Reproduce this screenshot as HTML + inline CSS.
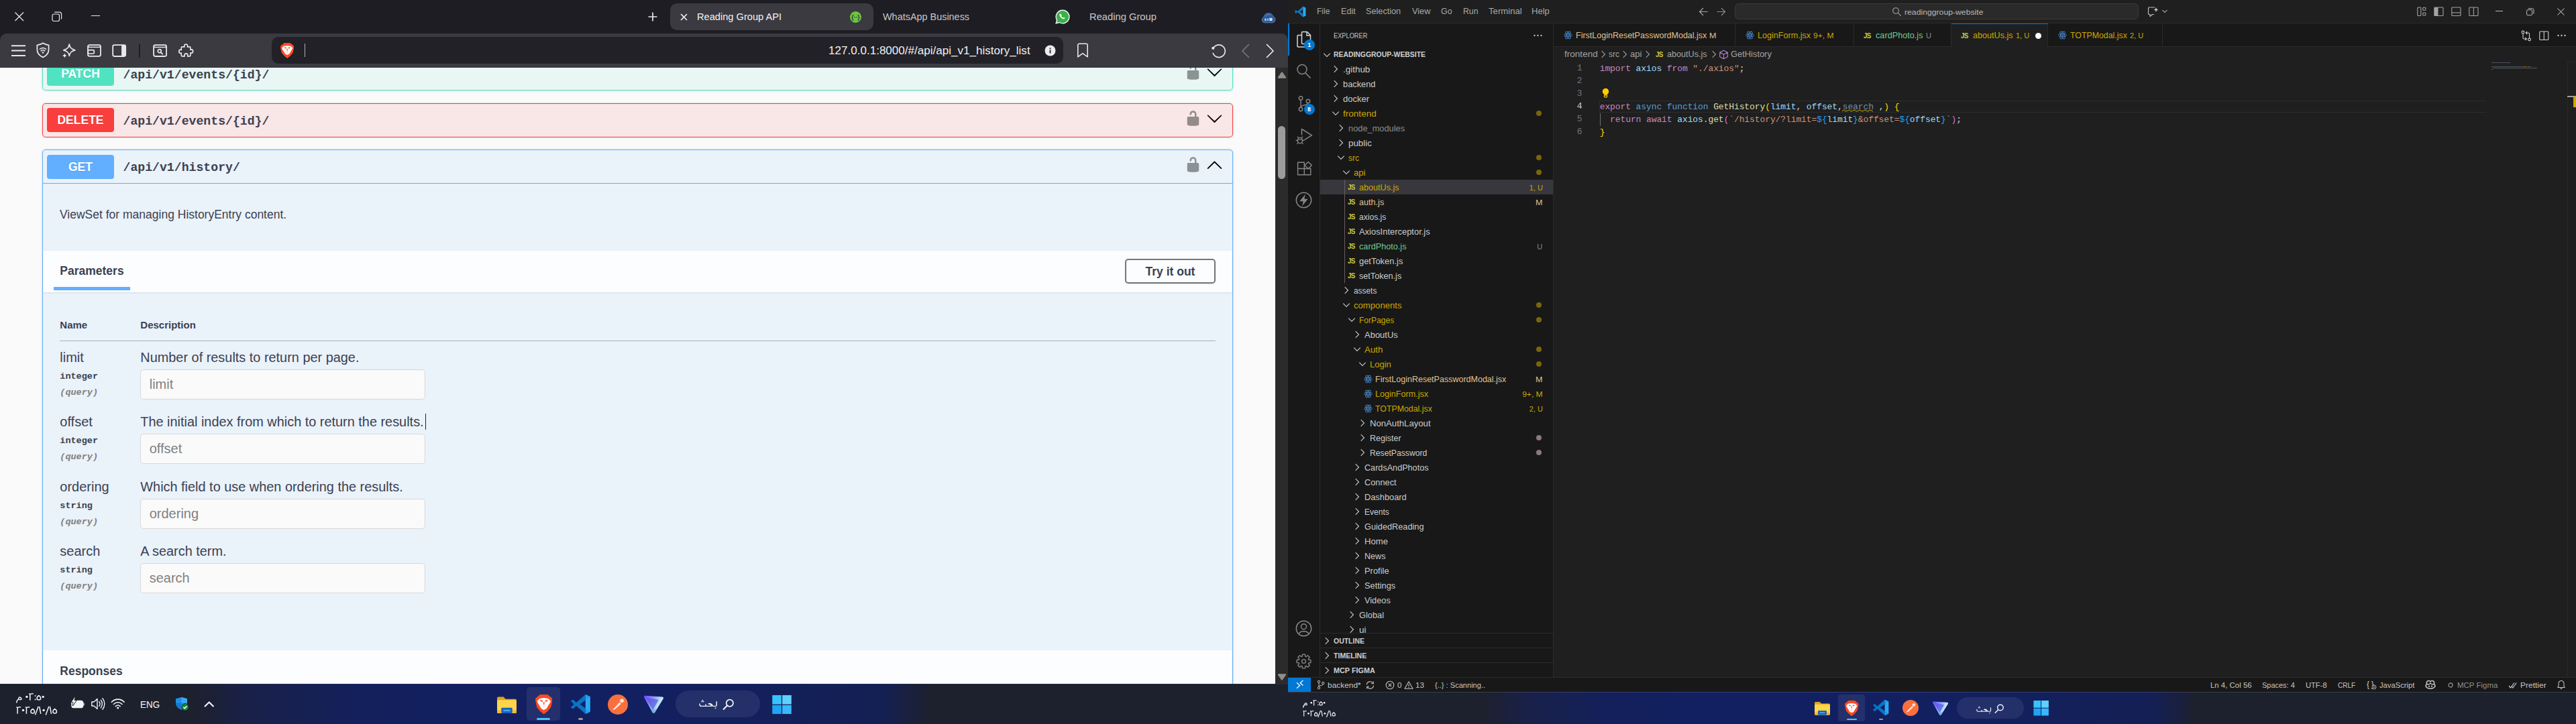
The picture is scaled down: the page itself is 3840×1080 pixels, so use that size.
<!DOCTYPE html>
<html><head><meta charset="utf-8"><title>screen</title>
<style>
html,body{margin:0;padding:0;background:#1f1f1f;}
body{width:3840px;height:1080px;overflow:hidden;position:relative;font-family:'Liberation Sans',sans-serif;}
.mon{position:absolute;top:0;width:1920px;height:1080px;overflow:hidden;}
svg{display:block;}
</style></head><body>
<div class="mon" style="left:0;background:#fafafa">
<div style="position:absolute;left:0;top:101px;width:1901px;height:919px;background:#fafafa;overflow:hidden">
<div style="position:absolute;left:0;top:-101px;width:1901px;height:1100px">
<div style="position:absolute;left:63px;top:84px;width:1775px;height:50.7px;box-sizing:border-box;border:1px solid #50e3c2;border-radius:5px;background:rgba(80,227,194,.1);box-shadow:0 0 3px rgba(0,0,0,.19)"></div>
<div style="position:absolute;left:70px;top:91.9px;width:100px;height:36px;border-radius:4px;background:#50e3c2;color:#fff;font:bold 17.5px/36px 'Liberation Sans', sans-serif;text-align:center;text-shadow:0 1px 0 rgba(0,0,0,.1)">PATCH</div>
<div style="position:absolute;left:183.5px;top:99.20px;line-height:27px;font-size:18.17px;font-family:'Liberation Mono', monospace;color:#3b4151;white-space:pre;font-weight:bold;">/api/v1/events/{id}/</div>
<svg style="position:absolute;left:1765.75px;top:94.8px;" width="25" height="25" viewBox="0 0 20 20"><path d="M15.8 8H14V5.6C14 2.703 12.665 1 10 1 7.334 1 6 2.703 6 5.6V6h2v-.801C8 3.754 8.797 3 10 3c1.203 0 2 .754 2 2.199V8H4c-.553 0-1 .646-1 1.199V17c0 .549.428 1.139.951 1.307l1.197.387C5.672 18.861 6.55 19 7.1 19h5.8c.549 0 1.428-.139 1.951-.307l1.196-.387c.524-.167.953-.757.953-1.306V9.199C17 8.646 16.352 8 15.8 8z" fill="#000" fill-opacity=".4"/></svg>
<svg style="position:absolute;left:1798px;top:94.60000000000001px;" width="25" height="25" viewBox="0 0 20 20"><path d="M17.418 6.109c.272-.268.709-.268.979 0s.271.701 0 .969l-7.908 7.83c-.27.268-.707.268-.979 0l-7.908-7.83c-.27-.268-.27-.701 0-.969.271-.268.709-.268.979 0L10 13.25l7.418-7.141z" fill="#000"/></svg>
<div style="position:absolute;left:63px;top:154.2px;width:1775px;height:50.7px;box-sizing:border-box;border:1px solid #f93e3e;border-radius:5px;background:rgba(249,62,62,.1);box-shadow:0 0 3px rgba(0,0,0,.19)"></div>
<div style="position:absolute;left:70px;top:160.89999999999998px;width:100px;height:36px;border-radius:4px;background:#f93e3e;color:#fff;font:bold 17.5px/36px 'Liberation Sans', sans-serif;text-align:center;text-shadow:0 1px 0 rgba(0,0,0,.1)">DELETE</div>
<div style="position:absolute;left:183.5px;top:168.20px;line-height:27px;font-size:18.17px;font-family:'Liberation Mono', monospace;color:#3b4151;white-space:pre;font-weight:bold;">/api/v1/events/{id}/</div>
<svg style="position:absolute;left:1765.75px;top:163.79999999999998px;" width="25" height="25" viewBox="0 0 20 20"><path d="M15.8 8H14V5.6C14 2.703 12.665 1 10 1 7.334 1 6 2.703 6 5.6V6h2v-.801C8 3.754 8.797 3 10 3c1.203 0 2 .754 2 2.199V8H4c-.553 0-1 .646-1 1.199V17c0 .549.428 1.139.951 1.307l1.197.387C5.672 18.861 6.55 19 7.1 19h5.8c.549 0 1.428-.139 1.951-.307l1.196-.387c.524-.167.953-.757.953-1.306V9.199C17 8.646 16.352 8 15.8 8z" fill="#000" fill-opacity=".4"/></svg>
<svg style="position:absolute;left:1798px;top:163.6px;" width="25" height="25" viewBox="0 0 20 20"><path d="M17.418 6.109c.272-.268.709-.268.979 0s.271.701 0 .969l-7.908 7.83c-.27.268-.707.268-.979 0l-7.908-7.83c-.27-.268-.27-.701 0-.969.271-.268.709-.268.979 0L10 13.25l7.418-7.141z" fill="#000"/></svg>
<div style="position:absolute;left:63px;top:223.2px;width:1775px;height:900px;box-sizing:border-box;border:1px solid #61affe;border-radius:5px;background:rgba(97,175,254,.1);box-shadow:0 0 3px rgba(0,0,0,.19)"></div>
<div style="position:absolute;left:70px;top:230.79999999999998px;width:100px;height:36px;border-radius:4px;background:#61affe;color:#fff;font:bold 17.5px/36px 'Liberation Sans', sans-serif;text-align:center;text-shadow:0 1px 0 rgba(0,0,0,.1)">GET</div>
<div style="position:absolute;left:183.5px;top:237.20px;line-height:27px;font-size:18.17px;font-family:'Liberation Mono', monospace;color:#3b4151;white-space:pre;font-weight:bold;">/api/v1/history/</div>
<svg style="position:absolute;left:1765.75px;top:232.79999999999998px;" width="25" height="25" viewBox="0 0 20 20"><path d="M15.8 8H14V5.6C14 2.703 12.665 1 10 1 7.334 1 6 2.703 6 5.6V6h2v-.801C8 3.754 8.797 3 10 3c1.203 0 2 .754 2 2.199V8H4c-.553 0-1 .646-1 1.199V17c0 .549.428 1.139.951 1.307l1.197.387C5.672 18.861 6.55 19 7.1 19h5.8c.549 0 1.428-.139 1.951-.307l1.196-.387c.524-.167.953-.757.953-1.306V9.199C17 8.646 16.352 8 15.8 8z" fill="#000" fill-opacity=".4"/></svg>
<svg style="position:absolute;left:1798px;top:232.6px;" width="25" height="25" viewBox="0 0 20 20"><path d="M 17.418 14.908 c .272 .268 .709 .268 .979 0 s .271 -.701 0 -.969 l -7.908 -7.83 c -.27 -.268 -.707 -.268 -.979 0 l -7.908 7.83 c -.27 .268 -.27 .701 0 .969 c .271 .268 .709 .268 .978 0 L 10 7.75 l 7.418 7.158 z" fill="#000"/></svg>
<div style="position:absolute;left:64px;top:273px;width:1773px;height:1px;background:#61affe;"></div>
<div style="position:absolute;left:89px;top:307.30px;line-height:26px;font-size:17.5px;font-family:'Liberation Sans', sans-serif;color:#3b4151;white-space:pre;">ViewSet for managing HistoryEntry content.</div>
<div style="position:absolute;left:64px;top:373.7px;width:1773px;height:62.5px;background:rgba(255,255,255,.8);box-shadow:0 1px 2px rgba(0,0,0,.1);"></div>
<div style="position:absolute;left:89.3px;top:391.30px;line-height:26px;font-size:17.5px;font-family:'Liberation Sans', sans-serif;color:#3b4151;white-space:pre;font-weight:bold;">Parameters</div>
<div style="position:absolute;left:80px;top:428px;width:114px;height:5px;background:#61affe;"></div>
<div style="position:absolute;left:1677px;top:386px;width:135px;height:37px;box-sizing:border-box;border:2px solid #747878;border-radius:5px;color:#3b4151;font:bold 17.5px/35px 'Liberation Sans', sans-serif;text-align:center;box-shadow:0 1px 2px rgba(0,0,0,.1)">Try it out</div>
<div style="position:absolute;left:89.3px;top:474.30px;line-height:22px;font-size:15px;font-family:'Liberation Sans', sans-serif;color:#3b4151;white-space:pre;font-weight:bold;">Name</div>
<div style="position:absolute;left:209.3px;top:474.30px;line-height:22px;font-size:15px;font-family:'Liberation Sans', sans-serif;color:#3b4151;white-space:pre;font-weight:bold;">Description</div>
<div style="position:absolute;left:89px;top:507.7px;width:1723px;height:1px;background:rgba(59,65,81,.38);"></div>
<div style="position:absolute;left:89.3px;top:517.80px;line-height:30px;font-size:20px;font-family:'Liberation Sans', sans-serif;color:#3b4151;white-space:pre;">limit</div>
<div style="position:absolute;left:209.3px;top:517.80px;line-height:30px;font-size:19.9px;font-family:'Liberation Sans', sans-serif;color:#3b4151;white-space:pre;">Number of results to return per page.</div>
<div style="position:absolute;left:89.3px;top:552.00px;line-height:20px;font-size:13.5px;font-family:'Liberation Mono', monospace;color:#3b4151;white-space:pre;font-weight:bold;">integer</div>
<div style="position:absolute;left:89.3px;top:575.70px;line-height:20px;font-size:13.5px;font-family:'Liberation Mono', monospace;color:#808080;white-space:pre;font-weight:bold;font-style:italic;">(query)</div>
<div style="position:absolute;left:209px;top:551px;width:425px;height:45px;box-sizing:border-box;border:1px solid #d9d9d9;border-radius:5px;background:#fafafa"></div>
<div style="position:absolute;left:222.7px;top:557.80px;line-height:30px;font-size:20px;font-family:'Liberation Sans', sans-serif;color:#808080;white-space:pre;">limit</div>
<div style="position:absolute;left:89.3px;top:613.80px;line-height:30px;font-size:20px;font-family:'Liberation Sans', sans-serif;color:#3b4151;white-space:pre;">offset</div>
<div style="position:absolute;left:209.3px;top:613.80px;line-height:30px;font-size:19.9px;font-family:'Liberation Sans', sans-serif;color:#3b4151;white-space:pre;">The initial index from which to return the results.</div>
<div style="position:absolute;left:89.3px;top:648.00px;line-height:20px;font-size:13.5px;font-family:'Liberation Mono', monospace;color:#3b4151;white-space:pre;font-weight:bold;">integer</div>
<div style="position:absolute;left:89.3px;top:671.70px;line-height:20px;font-size:13.5px;font-family:'Liberation Mono', monospace;color:#808080;white-space:pre;font-weight:bold;font-style:italic;">(query)</div>
<div style="position:absolute;left:209px;top:647px;width:425px;height:45px;box-sizing:border-box;border:1px solid #d9d9d9;border-radius:5px;background:#fafafa"></div>
<div style="position:absolute;left:222.7px;top:653.80px;line-height:30px;font-size:20px;font-family:'Liberation Sans', sans-serif;color:#808080;white-space:pre;">offset</div>
<div style="position:absolute;left:89.3px;top:710.80px;line-height:30px;font-size:20px;font-family:'Liberation Sans', sans-serif;color:#3b4151;white-space:pre;">ordering</div>
<div style="position:absolute;left:209.3px;top:710.80px;line-height:30px;font-size:19.9px;font-family:'Liberation Sans', sans-serif;color:#3b4151;white-space:pre;">Which field to use when ordering the results.</div>
<div style="position:absolute;left:89.3px;top:745.00px;line-height:20px;font-size:13.5px;font-family:'Liberation Mono', monospace;color:#3b4151;white-space:pre;font-weight:bold;">string</div>
<div style="position:absolute;left:89.3px;top:768.70px;line-height:20px;font-size:13.5px;font-family:'Liberation Mono', monospace;color:#808080;white-space:pre;font-weight:bold;font-style:italic;">(query)</div>
<div style="position:absolute;left:209px;top:744px;width:425px;height:45px;box-sizing:border-box;border:1px solid #d9d9d9;border-radius:5px;background:#fafafa"></div>
<div style="position:absolute;left:222.7px;top:750.80px;line-height:30px;font-size:20px;font-family:'Liberation Sans', sans-serif;color:#808080;white-space:pre;">ordering</div>
<div style="position:absolute;left:89.3px;top:806.80px;line-height:30px;font-size:20px;font-family:'Liberation Sans', sans-serif;color:#3b4151;white-space:pre;">search</div>
<div style="position:absolute;left:209.3px;top:806.80px;line-height:30px;font-size:19.9px;font-family:'Liberation Sans', sans-serif;color:#3b4151;white-space:pre;">A search term.</div>
<div style="position:absolute;left:89.3px;top:841.00px;line-height:20px;font-size:13.5px;font-family:'Liberation Mono', monospace;color:#3b4151;white-space:pre;font-weight:bold;">string</div>
<div style="position:absolute;left:89.3px;top:864.70px;line-height:20px;font-size:13.5px;font-family:'Liberation Mono', monospace;color:#808080;white-space:pre;font-weight:bold;font-style:italic;">(query)</div>
<div style="position:absolute;left:209px;top:840px;width:425px;height:45px;box-sizing:border-box;border:1px solid #d9d9d9;border-radius:5px;background:#fafafa"></div>
<div style="position:absolute;left:222.7px;top:846.80px;line-height:30px;font-size:20px;font-family:'Liberation Sans', sans-serif;color:#808080;white-space:pre;">search</div>
<div style="position:absolute;left:633.6px;top:617px;width:1.2px;height:24px;background:#222;"></div>
<div style="position:absolute;left:64px;top:969.7px;width:1773px;height:62.5px;background:rgba(255,255,255,.8);box-shadow:0 1px 2px rgba(0,0,0,.1);"></div>
<div style="position:absolute;left:89.3px;top:988.20px;line-height:26px;font-size:17.5px;font-family:'Liberation Sans', sans-serif;color:#3b4151;white-space:pre;font-weight:bold;">Responses</div>
</div></div>
<div style="position:absolute;left:1901px;top:101px;width:19px;height:919px;background:#2b2b2b;"></div>
<svg style="position:absolute;left:1903.5px;top:106px;" width="14" height="12" viewBox="0 0 14 12"><path d="M7 2.2L12.2 9.8H1.8z" fill="#8f908e" stroke="#8f908e" stroke-width="2" stroke-linejoin="round"/></svg>
<svg style="position:absolute;left:1903.5px;top:1003.5px;" width="14" height="12" viewBox="0 0 14 12"><path d="M7 9.8L12.2 2.2H1.8z" fill="#8f908e" stroke="#8f908e" stroke-width="2" stroke-linejoin="round"/></svg>
<div style="position:absolute;left:1905px;top:188px;width:11px;height:79px;background:#9b9d9a;border-radius:5.5px;"></div>
<div style="position:absolute;left:0px;top:0px;width:1920px;height:64px;background:#1e1d23;"></div>
<div style="position:absolute;left:0px;top:50px;width:1920px;height:51px;background:#3b3a40;border-radius:10px 10px 0 0;"></div>
<svg style="position:absolute;left:22px;top:18px;" width="14" height="14" viewBox="0 0 14 14"><path d="M0.5 0.5L13 13M13 0.5L0.5 13" stroke="#e8e8ec" stroke-width="1.3" fill="none"/></svg>
<svg style="position:absolute;left:77px;top:17px;" width="16" height="16" viewBox="0 0 16 16"><rect x="1" y="4" width="10.5" height="10.5" rx="2.2" fill="none" stroke="#e8e8ec" stroke-width="1.2"/><path d="M4.2 1.2H11.6A3 3 0 0 1 14.6 4.2V11.4" fill="none" stroke="#e8e8ec" stroke-width="1.2"/></svg>
<div style="position:absolute;left:136px;top:23px;width:13px;height:1.3px;background:#e8e8ec;"></div>
<svg style="position:absolute;left:966px;top:18px;" width="14" height="14" viewBox="0 0 14 14"><path d="M7 0.5V13.5M0.5 7H13.5" stroke="#e8e8ec" stroke-width="1.7" fill="none"/></svg>
<div style="position:absolute;left:999px;top:5px;width:302.5px;height:40px;background:#3b3a40;border-radius:10px;"></div>
<svg style="position:absolute;left:1014px;top:20px;" width="11" height="11" viewBox="0 0 11 11"><path d="M1 1L10 10M10 1L1 10" stroke="#e8e8ec" stroke-width="1.7" fill="none"/></svg>
<div style="position:absolute;left:1039px;top:14.00px;line-height:22px;font-size:14.55px;font-family:'Liberation Sans', sans-serif;color:#f2f2f4;white-space:pre;transform:scaleX(1.0056);transform-origin:left center;">Reading Group API</div>
<svg style="position:absolute;left:1266px;top:15.5px;" width="19" height="19" viewBox="0 0 19 19"><circle cx="9.5" cy="9.5" r="9" fill="#72c23f" stroke="#1d3a2a" stroke-width="0.9"/><text x="9.5" y="12.6" font-size="8.5" font-weight="bold" text-anchor="middle" fill="#173647" font-family="Liberation Sans, sans-serif">{··}</text></svg>
<div style="position:absolute;left:1316px;top:14.00px;line-height:22px;font-size:14.55px;font-family:'Liberation Sans', sans-serif;color:#c6c6ca;white-space:pre;transform:scaleX(0.9915);transform-origin:left center;">WhatsApp Business</div>
<svg style="position:absolute;left:1573px;top:14px;" width="22" height="22" viewBox="0 0 22 22"><path d="M11 1.2a9.8 9.8 0 0 0-8.4 14.8L1.2 20.8l5-1.3A9.8 9.8 0 1 0 11 1.2z" fill="#37b24a" stroke="#f3f3f3" stroke-width="1.4"/><path d="M7.6 6.2c-.4 0-.9.3-1.1 1-.5 1.5.3 3.3 2.1 5.1 1.8 1.8 3.6 2.4 5 1.8.7-.3 1-.9.9-1.3l-1.9-1-.9.9c-.9-.3-2.3-1.7-2.7-2.7l.8-.9z" fill="#fff"/></svg>
<div style="position:absolute;left:1624px;top:14.00px;line-height:22px;font-size:14.55px;font-family:'Liberation Sans', sans-serif;color:#c6c6ca;white-space:pre;transform:scaleX(1.0124);transform-origin:left center;">Reading Group</div>
<svg style="position:absolute;left:1880px;top:15px;" width="22" height="21" viewBox="0 0 22 21"><path d="M5.500 18.900A4.300 4.300 0 0 1 3.700 10.700 7.400 7.400 0 0 1 18 9.800 4.700 4.700 0 0 1 16.800 18.900z" fill="#2a5a9a" stroke="#7f9fc6" stroke-width=".6"/><path d="M7 9.500A4.500 4.500 0 0 1 14.500 8" fill="none" stroke="#4a80c2" stroke-width="1.200"/><rect x="5.300" y="12.600" width="2.300" height="3.400" fill="#c3d5ec"/><rect x="9" y="12.200" width="2" height="3.800" fill="#8fb3e0"/><rect x="12.300" y="11.800" width="4.300" height="4.200" fill="#d3e1f3"/></svg>
<svg style="position:absolute;left:17px;top:66px;" width="22" height="19" viewBox="0 0 22 19"><path d="M0 2.200H21M0 9.600H21M0 16.900H21" stroke="#e8e8ec" stroke-width="2" fill="none"/></svg>
<svg style="position:absolute;left:53px;top:63px;" width="22" height="24" viewBox="0 0 22 24"><path d="M11 1.300C13.500 3 16.500 3.900 19.600 4.300V11c0 5.400-3.700 9.300-8.600 11.400C6.100 20.300 2.400 16.400 2.400 11V4.300C5.500 3.900 8.500 3 11 1.300z" fill="none" stroke="#e8e8ec" stroke-width="1.750" stroke-linejoin="round"/><path d="M6.500 10.300a6.400 6.400 0 0 1 9 0M8.300 12.900a3.800 3.800 0 0 1 5.400 0" fill="none" stroke="#e8e8ec" stroke-width="1.600" stroke-linecap="round"/><circle cx="11" cy="15.600" r="1.250" fill="#e8e8ec"/></svg>
<svg style="position:absolute;left:91px;top:64px;" width="24" height="24" viewBox="0 0 24 24"><path d="M12.300 2.200C13 7 15 9.300 20.800 10.800 15 12.300 13 14.600 12.300 19.400 11.600 14.600 9.600 12.300 3.800 10.800 9.600 9.300 11.600 7 12.300 2.200z" fill="none" stroke="#e8e8ec" stroke-width="1.800" stroke-linejoin="round"/><path d="M5.300 15.300c.4 2.200 1.300 3.200 3.500 3.600-2.200.4-3.100 1.400-3.500 3.600-.4-2.200-1.300-3.200-3.500-3.600 2.200-.4 3.100-1.400 3.500-3.600z" fill="#e8e8ec"/></svg>
<svg style="position:absolute;left:129px;top:65px;" width="23" height="21" viewBox="0 0 23 21"><rect x="2" y="2.200" width="19" height="16.600" rx="2.600" fill="none" stroke="#e8e8ec" stroke-width="1.800"/><path d="M2 5.300H21" stroke="#e8e8ec" stroke-width="1.500"/><rect x="2.300" y="9.600" width="9" height="5.400" rx="1.600" fill="none" stroke="#e8e8ec" stroke-width="1.700"/></svg>
<svg style="position:absolute;left:166px;top:65px;" width="23" height="21" viewBox="0 0 23 21"><rect x="2.200" y="2.200" width="19" height="16.800" rx="2.400" fill="none" stroke="#e8e8ec" stroke-width="1.800"/><path d="M15.100 2.200H18.800A2.400 2.400 0 0 1 21.200 4.600V16.600A2.400 2.400 0 0 1 18.800 19H15.100z" fill="#e8e8ec"/></svg>
<div style="position:absolute;left:207.2px;top:65.5px;width:1.6px;height:20px;background:#1f1e24;"></div>
<svg style="position:absolute;left:227px;top:65px;" width="23" height="21" viewBox="0 0 23 21"><rect x="2.100" y="2.200" width="19" height="16.800" rx="2.400" fill="none" stroke="#e8e8ec" stroke-width="1.800"/><path d="M2.100 5.400H21.100" stroke="#e8e8ec" stroke-width="1.500"/><circle cx="10.800" cy="11.200" r="2.500" fill="none" stroke="#e8e8ec" stroke-width="1.700"/><path d="M12.800 13.200L15.300 15.700" stroke="#e8e8ec" stroke-width="1.800" stroke-linecap="round"/></svg>
<svg style="position:absolute;left:265px;top:63px;" width="24" height="24" viewBox="0 0 24 24"><path d="M9.300 5.200a2.700 2.700 0 0 1 5.400 0c0 .7-.2 1-.2 1.400h3.700a1.300 1.300 0 0 1 1.300 1.300v3.200c.5 0 .8-.3 1.500-.3a2.700 2.700 0 0 1 0 5.400c-.7 0-1-.3-1.500-.3v3.900a1.300 1.300 0 0 1-1.300 1.300h-3.500c0-.5.300-.8.300-1.500a2.700 2.700 0 0 0-5.400 0c0 .7.300 1 .3 1.500H5.600a1.300 1.300 0 0 1-1.300-1.300v-3.700c-.5 0-.8.300-1.200.3a2.700 2.700 0 0 1 0-5.400c.4 0 .7.300 1.200.3V7.900a1.300 1.300 0 0 1 1.300-1.300h3.900c0-.4-.2-.7-.2-1.400z" fill="none" stroke="#e8e8ec" stroke-width="1.800" stroke-linejoin="round" transform="translate(1.400 .6) scale(.9 .96)"/></svg>
<div style="position:absolute;left:405px;top:55px;width:1180px;height:40px;background:#222127;border-radius:10px;"></div>
<svg style="position:absolute;left:418px;top:64px;" width="20.4" height="23" viewBox="313 155 344 396" preserveAspectRatio="none"><path d="M410 155L560 155 602 190 657 235 651 300 626 410 560 490 485 551 410 490 344 410 319 300 313 235 368 190z" fill="#fb4a22"/><path d="M398 236L485 223 572 236 622 285 602 332 560 396 545 431 485 467 425 431 410 396 368 332 348 285z" fill="#fff"/><path d="M408 263L463 276 456 301 420 291zM562 263L507 276 514 301 550 291zM473 306H497L494 352 485 362 476 352zM452 402L485 385 518 402 485 394z" fill="#fb4a22"/></svg>
<div style="position:absolute;left:453.7px;top:65px;width:1.4px;height:20px;background:#aeb0b6;"></div>
<div style="position:absolute;left:1235.3px;top:63.00px;line-height:25px;font-size:16.97px;font-family:'Liberation Sans', sans-serif;color:#f0f0f3;white-space:pre;transform:scaleX(1.0062);transform-origin:left center;">127.0.0.1:8000/#/api/api_v1_history_list</div>
<svg style="position:absolute;left:1556.5px;top:66.5px;" width="17" height="17" viewBox="0 0 17 17"><circle cx="8.5" cy="8.5" r="8" fill="#ededf0"/><rect x="7.6" y="7.3" width="1.8" height="5.2" fill="#222127"/><rect x="7.6" y="4.3" width="1.8" height="1.8" fill="#222127"/></svg>
<svg style="position:absolute;left:1605px;top:64px;" width="18" height="23" viewBox="0 0 18 23"><path d="M1.8 3.2A2 2 0 0 1 3.8 1.2H14.2A2 2 0 0 1 16.2 3.2V20.8L9 15.6 1.8 20.8z" fill="none" stroke="#e8e8ec" stroke-width="1.6" stroke-linejoin="round"/></svg>
<svg style="position:absolute;left:1804px;top:63px;" width="26" height="25" viewBox="0 0 26 25"><path d="M4.600 9.200A9.300 9.300 0 1 1 4.300 16.500" fill="none" stroke="#e8e8ec" stroke-width="1.700" stroke-linecap="round"/><circle cx="4.300" cy="8.800" r="2.100" fill="#e8e8ec"/></svg>
<svg style="position:absolute;left:1850px;top:65px;" width="14" height="22" viewBox="0 0 14 22"><path d="M11.5 1.5L2 11l9.5 9.5" fill="none" stroke="#77767e" stroke-width="1.7" stroke-linecap="round" stroke-linejoin="round"/></svg>
<svg style="position:absolute;left:1886px;top:65px;" width="14" height="22" viewBox="0 0 14 22"><path d="M2.5 1.5L12 11l-9.5 9.5" fill="none" stroke="#e8e8ec" stroke-width="1.7" stroke-linecap="round" stroke-linejoin="round"/></svg>
<div style="position:absolute;left:0px;top:1020px;width:1920px;height:60px;background:linear-gradient(90deg,#1d202d 0,#1d202d 285px,#19214a 375px,#14205a 520px,#122062 700px,#122060 1000px,#142054 1300px,#142052 1320px,#191f40 1350px,#1d202d 1390px,#1d202d 1920px);"></div>
<div style="position:absolute;left:0px;top:1020px;width:1920px;height:1px;background:rgba(255,255,255,.06);"></div>
<svg style="position:absolute;left:23.6px;top:1034.3px;overflow:visible;" width="45.0" height="16.0" viewBox="0 0 45.0 16.0"><g transform="scale(1.0)"><path d="M7.80 9.6C8.00 5.2 3.60 5.2 3.80 8.3C4.00 9.9 6.20 9.9 7.80 9.3M3.90 8.6C2.20 9.6 0.80 11.500 0.80 14.6" fill="none" stroke="#f4f4f6" stroke-width="1.5" stroke-linecap="butt" stroke-linejoin="round"/><circle cx="15.90" cy="5.4" r="1.7" fill="#f4f4f6"/><path d="M20.80 10.7V.9M19.20 .9H20.80M20.80 2.6C21.20 .9 24.30 .2 25.70 1.2" fill="none" stroke="#f4f4f6" stroke-width="1.5" stroke-linecap="butt" stroke-linejoin="round"/><circle cx="28.60" cy="3.9" r=".95" fill="#f4f4f6"/><circle cx="28.60" cy="9.5" r=".95" fill="#f4f4f6"/><path d="M33.90 3.6C31.80 4.6 31.10 6.4 31.10 7.7C31.10 10.700 36.70 10.700 36.70 7.7C36.70 6.4 36.00 4.6 33.90 3.6z" fill="none" stroke="#f4f4f6" stroke-width="1.5" stroke-linecap="butt" stroke-linejoin="round"/><circle cx="40.20" cy="5.4" r="1.7" fill="#f4f4f6"/></g></svg><svg style="position:absolute;left:23.6px;top:1054.1px;overflow:visible;" width="63.2" height="16.0" viewBox="0 0 63.2 16.0"><g transform="scale(1.0)"><path d="M2.10 10.7V.9M0.50 .9H2.10M2.10 2.6C2.50 .9 5.60 .2 7.00 1.2" fill="none" stroke="#f4f4f6" stroke-width="1.5" stroke-linecap="butt" stroke-linejoin="round"/><circle cx="10.50" cy="5.4" r="1.7" fill="#f4f4f6"/><path d="M15.40 10.7V.9M13.80 .9H15.40M15.40 2.6C15.80 .9 18.90 .2 20.30 1.2" fill="none" stroke="#f4f4f6" stroke-width="1.5" stroke-linecap="butt" stroke-linejoin="round"/><path d="M24.70 3.6C22.60 4.6 21.90 6.4 21.90 7.7C21.90 10.700 27.50 10.700 27.50 7.7C27.50 6.4 26.80 4.6 24.70 3.6z" fill="none" stroke="#f4f4f6" stroke-width="1.5" stroke-linecap="butt" stroke-linejoin="round"/><path d="M33.20 -.2L28.50 12.6" fill="none" stroke="#f4f4f6" stroke-width="1.5" stroke-linecap="butt" stroke-linejoin="round"/><path d="M34.70 0L36.80 10.8" fill="none" stroke="#f4f4f6" stroke-width="1.5" stroke-linecap="butt" stroke-linejoin="round"/><circle cx="41.10" cy="5.4" r="1.7" fill="#f4f4f6"/><path d="M48.90 -.2L44.20 12.6" fill="none" stroke="#f4f4f6" stroke-width="1.5" stroke-linecap="butt" stroke-linejoin="round"/><path d="M50.40 0L52.50 10.8" fill="none" stroke="#f4f4f6" stroke-width="1.5" stroke-linecap="butt" stroke-linejoin="round"/><path d="M57.70 3.6C55.60 4.6 54.90 6.4 54.90 7.7C54.90 10.700 60.50 10.700 60.50 7.7C60.50 6.4 59.80 4.6 57.70 3.6z" fill="none" stroke="#f4f4f6" stroke-width="1.5" stroke-linecap="butt" stroke-linejoin="round"/></g></svg>
<svg style="position:absolute;left:105px;top:1038px;" width="23" height="20" viewBox="0 0 23 20"><rect x="2" y="7.400" width="16.600" height="10.200" rx="3.200" fill="#f4f4f6" stroke="#f4f4f6" stroke-width="1.500"/><path d="M19.400 10C21.100 10.200 21.100 14.800 19.400 15z" fill="#f4f4f6"/><path d="M6.800 1.400L1.600 9.200H4.500L3.200 14.800 8.600 7H5.600z" fill="#f4f4f6" stroke="#1d202d" stroke-width="1.700" paint-order="stroke"/></svg>
<svg style="position:absolute;left:135px;top:1039px;" width="23" height="22" viewBox="0 0 23 22"><path d="M1.800 8H5L10 3.500V18.500L5 14H1.800z" fill="none" stroke="#f4f4f6" stroke-width="1.400" stroke-linejoin="round"/><path d="M12.800 7.800C14.300 9.600 14.300 12.400 12.800 14.200M15.300 5.300C18 8.500 18 13.500 15.300 16.700M17.900 2.800C21.800 7.500 21.800 14.500 17.900 19.200" fill="none" stroke="#f4f4f6" stroke-width="1.400" stroke-linecap="round"/></svg>
<svg style="position:absolute;left:165.3px;top:1041px;" width="21.5" height="17" viewBox="0 0 21.5 17"><path d="M1.300 6.200C6.600 .8 14.900 .8 20.200 6.200M4.400 9.500C8 5.900 13.500 5.900 17.100 9.500M7.400 12.600C9.400 10.700 12.100 10.700 14.100 12.600" fill="none" stroke="#f4f4f6" stroke-width="1.600" stroke-linecap="round"/><circle cx="10.750" cy="15" r="1.500" fill="#f4f4f6"/></svg>
<div style="position:absolute;left:208.7px;top:1039.60px;line-height:22px;font-size:14.55px;font-family:'Liberation Sans', sans-serif;color:#f4f4f6;white-space:pre;transform:scaleX(0.9227);transform-origin:left center;">ENG</div>
<svg style="position:absolute;left:261px;top:1039px;" width="22" height="22" viewBox="0 0 22 22"><path d="M9.500 1L18 3.200V9.500C18 14.500 14 18.200 9.500 19.800 5 18.200 1 14.500 1 9.500V3.200z" fill="#1f8fe6"/><path d="M9.500 1L18 3.200V9.500H9.500z" fill="#39a9f5"/><path d="M1 9.500H9.500V19.800C5 18.200 1 14.500 1 9.500z" fill="#1578cf"/><circle cx="15" cy="15.800" r="5.200" fill="#13893b" stroke="#1d202d" stroke-width=".8"/><path d="M12.500 15.900L14.300 17.700 17.600 14.200" fill="none" stroke="#fff" stroke-width="1.500"/></svg>
<svg style="position:absolute;left:303.5px;top:1044.5px;" width="16" height="11" viewBox="0 0 16 11"><path d="M1.600 8.600L7.750 2.400 13.900 8.600" fill="none" stroke="#f4f4f6" stroke-width="2.100" stroke-linecap="round" stroke-linejoin="round"/></svg>
<svg style="position:absolute;left:740px;top:1036.5px;" width="31" height="29" viewBox="0 0 32 30"><path d="M1 4.500A2 2 0 0 1 3 2.500H11L14 6H29A2 2 0 0 1 31 8V12H1z" fill="#e3a21a"/><rect x="1" y="7.500" width="30" height="20.500" rx="2" fill="#ffd54a"/><path d="M1 23H31V26A2 2 0 0 1 29 28H3A2 2 0 0 1 1 26z" fill="#f5b83a"/><rect x="7.500" y="19.500" width="17" height="8.500" rx="1.500" fill="#1464c0"/><rect x="10.500" y="22.500" width="11" height="2.200" rx="1" fill="#4ea3f1"/></svg>
<div style="position:absolute;left:785px;top:1025px;width:50px;height:50px;background:rgba(255,255,255,.075);border-radius:5px;"></div>
<svg style="position:absolute;left:797.5px;top:1035.5px;" width="25.5" height="29.5" viewBox="313 155 344 396" preserveAspectRatio="none"><path d="M410 155L560 155 602 190 657 235 651 300 626 410 560 490 485 551 410 490 344 410 319 300 313 235 368 190z" fill="#fb4a22"/><path d="M398 236L485 223 572 236 622 285 602 332 560 396 545 431 485 467 425 431 410 396 368 332 348 285z" fill="#fff"/><path d="M408 263L463 276 456 301 420 291zM562 263L507 276 514 301 550 291zM473 306H497L494 352 485 362 476 352zM452 402L485 385 518 402 485 394z" fill="#fb4a22"/></svg>
<div style="position:absolute;left:800px;top:1070.5px;width:19.5px;height:3px;background:#4cc2ff;border-radius:1.500px;"></div>
<svg style="position:absolute;left:850px;top:1035px;" width="31" height="31" viewBox="0 0 32 32"><path d="M23.500 1L30.800 4.500V27.500L23.500 31z" fill="#2aa9f3"/><path d="M23.500 1L9.300 13.300 4.400 8.800 .8 11.200 5.800 16 .8 20.800 4.400 23.200 9.300 18.700 23.500 31V22.300L14.800 16 23.500 9.700z" fill="#0a73c4"/><path d="M23.500 1L30.800 4.500 23.500 9.200z" fill="#1f9cf0"/><path d="M23.500 22.800L30.800 27.500 23.500 31z" fill="#1f9cf0"/></svg>
<div style="position:absolute;left:861.5px;top:1070.5px;width:7px;height:3px;background:#9a9ca6;border-radius:1.500px;"></div>
<svg style="position:absolute;left:905.5px;top:1035.5px;" width="30" height="30" viewBox="0 0 32 32"><circle cx="16" cy="16" r="16" fill="#f9703e"/><path d="M7.500 25L9.800 21.800 18.800 12.200 21.300 14.600 11.800 23.300z" fill="#fbe9dc"/><circle cx="22.400" cy="9.900" r="3" fill="#fbe9dc"/></svg>
<svg style="position:absolute;left:959px;top:1035.5px;" width="31" height="29" viewBox="0 0 32 30"><defs><linearGradient id="pg959" x1="0" y1=".1" x2="1" y2=".5"><stop offset="0" stop-color="#6d4aff"/><stop offset=".45" stop-color="#8f9dfb"/><stop offset=".8" stop-color="#c4e6fb"/><stop offset="1" stop-color="#d4f0fb"/></linearGradient><linearGradient id="ph959" x1="0" y1="0" x2="0" y2="1"><stop offset="0" stop-color="#6d4aff" stop-opacity="0"/><stop offset="1" stop-color="#3fd6c6"/></linearGradient><linearGradient id="pi959" x1="0" y1="0" x2="1" y2="1"><stop offset="0" stop-color="#6a4cf0"/><stop offset="1" stop-color="#4a78d8"/></linearGradient></defs><path d="M3 1.800C1.200 1.600.4 3.200 1.400 4.800L13.600 26.800C14.800 28.900 17 28.900 18.200 26.800L30.600 6.800C31.600 5.200 30.800 3.700 29 3.500z" fill="url(#pg959)"/><path d="M13.600 26.800C14.800 28.900 17 28.900 18.200 26.800L21.500 21.300 10.300 21z" fill="url(#ph959)"/><path d="M5.300 4.600C4.500 4.500 4.100 5.300 4.500 6L13.700 22.300C14.200 23.200 15.100 23.200 15.600 22.300L22.800 9.400C23.300 8.600 22.900 7.900 22 7.800z" fill="url(#pi959)" fill-opacity=".8"/></svg>
<div style="position:absolute;left:1006.5px;top:1030px;width:126px;height:40px;background:rgba(255,255,255,.075);border-radius:20.0px;"></div><svg style="position:absolute;left:1042px;top:1042.3px;overflow:visible;" width="27.3" height="15.8" viewBox="0 0 27.3 15.8"><g transform="scale(1.05)" fill="none" stroke="#f4f4f6" stroke-width="1.35" stroke-linecap="round" stroke-linejoin="round"><path d="M25 4.500V9.500C25 10.300 24.400 10.800 23.600 10.800H19.500"/><path d="M19.500 10.800C19 8 15.500 6.500 13.500 7.500 15.800 7.600 17.500 8.600 17.500 10.800H9.500"/><path d="M9.500 10.800V8.500M9.500 10.800H3C1.500 10.800 1 9.800 1 8.500V7.500"/></g><g transform="scale(1.05)" fill="#f4f4f6"><circle cx="23.300" cy="13.600" r=".9"/><circle cx="4" cy="4.300" r=".85"/><circle cx="6.200" cy="4.300" r=".85"/><circle cx="5.100" cy="2.500" r=".85"/></g></svg><svg style="position:absolute;left:1076.5px;top:1042px;" width="17.5" height="17.5" viewBox="0 0 17 17"><circle cx="10.500" cy="6.500" r="5" fill="none" stroke="#f4f4f6" stroke-width="1.700"/><path d="M6.800 10.200L1.500 15.500" stroke="#f4f4f6" stroke-width="1.900" stroke-linecap="round"/></svg>
<svg style="position:absolute;left:1150.5px;top:1036.5px;" width="29" height="28.5" viewBox="0 0 32 32"><rect x="0" y="0" width="15.300" height="15.300" fill="#37c3ff"/><rect x="16.700" y="0" width="15.300" height="15.300" fill="#5fd0ff"/><rect x="0" y="16.700" width="15.300" height="15.300" fill="#1ea4f5"/><rect x="16.700" y="16.700" width="15.300" height="15.300" fill="#38b8fb"/></svg>
</div>
<div class="mon" style="left:1920px;background:#1f1f1f">
<div style="position:absolute;left:396px;top:35px;width:1524px;height:975px;background:#1f1f1f;"></div>
<div style="position:absolute;left:396px;top:35px;width:1524px;height:35px;background:#181818;border-bottom:1px solid #2b2b2b;box-sizing:border-box;"></div>
<div style="position:absolute;left:396px;top:35px;width:271px;height:34px;background:#181818;border-right:1px solid #2b2b2b;box-sizing:border-box;"></div>
<svg style="position:absolute;left:411px;top:46.0px;" width="13" height="13" viewBox="0 0 13 13"><g fill="none" stroke="#4683c4" stroke-width=".95"><ellipse cx="6.500" cy="6.500" rx="6" ry="2.350"/><ellipse cx="6.500" cy="6.500" rx="6" ry="2.350" transform="rotate(60 6.500 6.500)"/><ellipse cx="6.500" cy="6.500" rx="6" ry="2.350" transform="rotate(120 6.500 6.500)"/></g><circle cx="6.500" cy="6.500" r="1.150" fill="#4683c4"/></svg>
<div style="position:absolute;left:428.5px;top:43.90px;line-height:19px;font-size:12.61px;font-family:'Liberation Sans', sans-serif;color:#e2c08d;white-space:pre;transform:scaleX(0.992);transform-origin:left center;">FirstLoginResetPasswordModal.jsx</div>
<div style="position:absolute;left:628.46181640625px;top:44.90px;line-height:17px;font-size:11.35px;font-family:'Liberation Sans', sans-serif;color:#e2c08d;white-space:pre;transform:scaleX(1.1112);transform-origin:left center;">M</div>
<div style="position:absolute;left:667px;top:35px;width:177px;height:34px;background:#181818;border-right:1px solid #2b2b2b;box-sizing:border-box;"></div>
<svg style="position:absolute;left:682px;top:46.0px;" width="13" height="13" viewBox="0 0 13 13"><g fill="none" stroke="#4683c4" stroke-width=".95"><ellipse cx="6.500" cy="6.500" rx="6" ry="2.350"/><ellipse cx="6.500" cy="6.500" rx="6" ry="2.350" transform="rotate(60 6.500 6.500)"/><ellipse cx="6.500" cy="6.500" rx="6" ry="2.350" transform="rotate(120 6.500 6.500)"/></g><circle cx="6.500" cy="6.500" r="1.150" fill="#4683c4"/></svg>
<div style="position:absolute;left:699.5px;top:43.90px;line-height:19px;font-size:12.61px;font-family:'Liberation Sans', sans-serif;color:#cca700;white-space:pre;transform:scaleX(0.9985);transform-origin:left center;">LoginForm.jsx</div>
<div style="position:absolute;left:783.17275390625px;top:44.90px;line-height:17px;font-size:11.35px;font-family:'Liberation Sans', sans-serif;color:#cca700;white-space:pre;transform:scaleX(1.0649);transform-origin:left center;">9+, M</div>
<div style="position:absolute;left:844px;top:35px;width:145px;height:34px;background:#181818;border-right:1px solid #2b2b2b;box-sizing:border-box;"></div>
<div style="position:absolute;left:858.0px;top:47.00px;line-height:12px;font-size:10.6px;font-family:'Liberation Sans', sans-serif;color:#cbcb41;white-space:pre;font-weight:bold;letter-spacing:-0.7px;transform:scaleX(0.93);transform-origin:left center;">JS</div>
<div style="position:absolute;left:876.3px;top:43.90px;line-height:19px;font-size:12.61px;font-family:'Liberation Sans', sans-serif;color:#73c991;white-space:pre;transform:scaleX(1.0062);transform-origin:left center;">cardPhoto.js</div>
<div style="position:absolute;left:951.42880859375px;top:44.90px;line-height:17px;font-size:11.35px;font-family:'Liberation Sans', sans-serif;color:#8a8a8a;white-space:pre;transform:scaleX(0.98);transform-origin:left center;">U</div>
<div style="position:absolute;left:989px;top:35px;width:144px;height:35px;background:#1f1f1f;border-right:1px solid #2b2b2b;box-sizing:border-box;border-top:1px solid #0078d4;"></div>
<div style="position:absolute;left:1003.0px;top:47.00px;line-height:12px;font-size:10.6px;font-family:'Liberation Sans', sans-serif;color:#cbcb41;white-space:pre;font-weight:bold;letter-spacing:-0.7px;transform:scaleX(0.93);transform-origin:left center;">JS</div>
<div style="position:absolute;left:1021.3px;top:43.90px;line-height:19px;font-size:12.61px;font-family:'Liberation Sans', sans-serif;color:#cca700;white-space:pre;transform:scaleX(0.9995);transform-origin:left center;">aboutUs.js</div>
<div style="position:absolute;left:1085.4473632812499px;top:44.90px;line-height:17px;font-size:11.35px;font-family:'Liberation Sans', sans-serif;color:#cca700;white-space:pre;transform:scaleX(0.9647);transform-origin:left center;">1, U</div>
<div style="position:absolute;left:1113.5px;top:48.8px;width:9px;height:9px;background:#ffffff;border-radius:50%;"></div>
<div style="position:absolute;left:1133px;top:35px;width:171px;height:34px;background:#181818;border-right:1px solid #2b2b2b;box-sizing:border-box;"></div>
<svg style="position:absolute;left:1148px;top:46.0px;" width="13" height="13" viewBox="0 0 13 13"><g fill="none" stroke="#4683c4" stroke-width=".95"><ellipse cx="6.500" cy="6.500" rx="6" ry="2.350"/><ellipse cx="6.500" cy="6.500" rx="6" ry="2.350" transform="rotate(60 6.500 6.500)"/><ellipse cx="6.500" cy="6.500" rx="6" ry="2.350" transform="rotate(120 6.500 6.500)"/></g><circle cx="6.500" cy="6.500" r="1.150" fill="#4683c4"/></svg>
<div style="position:absolute;left:1165.5px;top:43.90px;line-height:19px;font-size:12.61px;font-family:'Liberation Sans', sans-serif;color:#cca700;white-space:pre;transform:scaleX(0.9791);transform-origin:left center;">TOTPModal.jsx</div>
<div style="position:absolute;left:1254.9427734375px;top:44.90px;line-height:17px;font-size:11.35px;font-family:'Liberation Sans', sans-serif;color:#cca700;white-space:pre;transform:scaleX(0.9647);transform-origin:left center;">2, U</div>
<svg style="position:absolute;left:1837.5px;top:45px;" width="16" height="17" viewBox="0 0 16 17"><circle cx="3" cy="3" r="1.900" fill="none" stroke="#d0d0d0" stroke-width="1.100"/><circle cx="12.500" cy="14" r="1.900" fill="none" stroke="#d0d0d0" stroke-width="1.100"/><path d="M3 5V11.500A1.500 1.500 0 0 0 4.500 13H8M6.300 11L8.300 13 6.300 15M12.500 12V5.500A1.500 1.500 0 0 0 11 4H7.500M9.200 2L7.200 4 9.200 6" fill="none" stroke="#d0d0d0" stroke-width="1.100"/></svg>
<svg style="position:absolute;left:1864.5px;top:46px;" width="15" height="15" viewBox="0 0 15 15"><rect x=".8" y="1" width="13" height="12.500" rx="1" fill="none" stroke="#d0d0d0" stroke-width="1.100"/><path d="M7.300 1V13.500" stroke="#d0d0d0" stroke-width="1.100"/></svg>
<svg style="position:absolute;left:1890.5px;top:50px;" width="16" height="6" viewBox="0 0 16 6"><circle cx="2.500" cy="3" r="1.150" fill="#d0d0d0"/><circle cx="7.500" cy="3" r="1.150" fill="#d0d0d0"/><circle cx="12.500" cy="3" r="1.150" fill="#d0d0d0"/></svg>
<div style="position:absolute;left:412px;top:71.80px;line-height:19px;font-size:12.61px;font-family:'Liberation Sans', sans-serif;color:#a3a3a3;white-space:pre;transform:scaleX(1.0752);transform-origin:left center;">frontend</div>
<svg style="position:absolute;left:462px;top:73px;" width="16" height="16" viewBox="0 0 16 16"><path d="M5.7 3.2L10.5 8 5.7 12.800" fill="none" stroke="#9a9a9a" stroke-width="1.15"/></svg>
<div style="position:absolute;left:477.5px;top:71.80px;line-height:19px;font-size:12.61px;font-family:'Liberation Sans', sans-serif;color:#a3a3a3;white-space:pre;transform:scaleX(0.9546);transform-origin:left center;">src</div>
<svg style="position:absolute;left:494px;top:73px;" width="16" height="16" viewBox="0 0 16 16"><path d="M5.7 3.2L10.5 8 5.7 12.800" fill="none" stroke="#9a9a9a" stroke-width="1.15"/></svg>
<div style="position:absolute;left:510px;top:71.80px;line-height:19px;font-size:12.61px;font-family:'Liberation Sans', sans-serif;color:#a3a3a3;white-space:pre;transform:scaleX(1.0343);transform-origin:left center;">api</div>
<svg style="position:absolute;left:528px;top:73px;" width="16" height="16" viewBox="0 0 16 16"><path d="M5.7 3.2L10.5 8 5.7 12.800" fill="none" stroke="#9a9a9a" stroke-width="1.15"/></svg>
<div style="position:absolute;left:547.5px;top:75.20px;line-height:12px;font-size:10.6px;font-family:'Liberation Sans', sans-serif;color:#cbcb41;white-space:pre;font-weight:bold;letter-spacing:-0.7px;transform:scaleX(0.93);transform-origin:left center;">JS</div>
<div style="position:absolute;left:565px;top:71.80px;line-height:19px;font-size:12.61px;font-family:'Liberation Sans', sans-serif;color:#a3a3a3;white-space:pre;transform:scaleX(0.9995);transform-origin:left center;">aboutUs.js</div>
<svg style="position:absolute;left:627px;top:73px;" width="16" height="16" viewBox="0 0 16 16"><path d="M5.7 3.2L10.5 8 5.7 12.800" fill="none" stroke="#9a9a9a" stroke-width="1.15"/></svg>
<svg style="position:absolute;left:641.5px;top:73.5px;" width="15" height="15" viewBox="0 0 15 15"><path d="M7.500 1.200L13.300 4.200V10.800L7.500 13.800 1.700 10.800V4.200zM1.900 4.300L7.500 7.300 13.100 4.300M7.500 7.300V13.600" fill="none" stroke="#b180d7" stroke-width="1.100" stroke-linejoin="round"/></svg>
<div style="position:absolute;left:659.5px;top:71.80px;line-height:19px;font-size:12.61px;font-family:'Liberation Sans', sans-serif;color:#a3a3a3;white-space:pre;transform:scaleX(1.0218);transform-origin:left center;">GetHistory</div>
<div style="position:absolute;right:1481.5px;top:92.40px;line-height:20px;font-size:13px;font-family:'Liberation Mono', monospace;color:#6e7681;white-space:pre;">1</div>
<div style="position:absolute;right:1481.5px;top:111.40px;line-height:20px;font-size:13px;font-family:'Liberation Mono', monospace;color:#6e7681;white-space:pre;">2</div>
<div style="position:absolute;right:1481.5px;top:130.40px;line-height:20px;font-size:13px;font-family:'Liberation Mono', monospace;color:#6e7681;white-space:pre;">3</div>
<div style="position:absolute;right:1481.5px;top:149.40px;line-height:20px;font-size:13px;font-family:'Liberation Mono', monospace;color:#cccccc;white-space:pre;">4</div>
<div style="position:absolute;right:1481.5px;top:168.40px;line-height:20px;font-size:13px;font-family:'Liberation Mono', monospace;color:#6e7681;white-space:pre;">5</div>
<div style="position:absolute;right:1481.5px;top:187.40px;line-height:20px;font-size:13px;font-family:'Liberation Mono', monospace;color:#6e7681;white-space:pre;">6</div>
<div style="position:absolute;left:464px;top:149.5px;width:1322px;height:18px;border-top:1px solid #2c2c2c;border-bottom:1px solid #2c2c2c;border-left:1px solid #2c2c2c;box-sizing:border-box;height:18.500px;"></div>
<div style="position:absolute;left:464.5px;top:168.5px;width:1px;height:19px;background:#707070;"></div>
<svg style="position:absolute;left:466.5px;top:130.5px;" width="13" height="15" viewBox="0 0 13 15"><path d="M6.500 .8A4.700 4.700 0 0 0 3.300 8.900C3.900 9.500 4.200 10 4.200 10.700H8.800C8.800 10 9.100 9.500 9.700 8.900A4.700 4.700 0 0 0 6.500 .8z" fill="#ffcc00"/><rect x="4.300" y="11.300" width="4.400" height="2.600" rx=".6" fill="none" stroke="#ffcc00" stroke-width="1.100"/></svg>
<div style="position:absolute;left:464.700px;top:92.9px;line-height:19px;font-size:13px;letter-spacing:-0.100px;font-family:'Liberation Mono', monospace;white-space:pre;color:#d4d4d4"><span style="color:#c586c0">import</span> <span style="color:#9cdcfe">axios</span> <span style="color:#c586c0">from</span> <span style="color:#ce9178">&quot;./axios&quot;</span>;</div>
<div style="position:absolute;left:464.700px;top:149.9px;line-height:19px;font-size:13px;letter-spacing:-0.100px;font-family:'Liberation Mono', monospace;white-space:pre;color:#d4d4d4"><span style="color:#c586c0">export</span> <span style="color:#569cd6">async</span> <span style="color:#569cd6">function</span> <span style="color:#dcdcaa">GetHistory</span><span style="color:#ffd700">(</span><span style="color:#9cdcfe">limit</span>, <span style="color:#9cdcfe">offset</span>,<span style="color:rgba(156,220,254,.62)">search</span> ,<span style="color:#ffd700">)</span> <span style="color:#ffd700">{</span></div>
<div style="position:absolute;left:464.700px;top:168.9px;line-height:19px;font-size:13px;letter-spacing:-0.100px;font-family:'Liberation Mono', monospace;white-space:pre;color:#d4d4d4">  <span style="color:#c586c0">return</span> <span style="color:#c586c0">await</span> <span style="color:#9cdcfe">axios</span>.<span style="color:#dcdcaa">get</span><span style="color:#da70d6">(</span><span style="color:#ce9178">`/history/?limit=</span><span style="color:#179fff">${</span><span style="color:#9cdcfe">limit</span><span style="color:#179fff">}</span><span style="color:#ce9178">&amp;offset=</span><span style="color:#179fff">${</span><span style="color:#9cdcfe">offset</span><span style="color:#179fff">}</span><span style="color:#ce9178">`</span><span style="color:#da70d6">)</span>;</div>
<div style="position:absolute;left:464.700px;top:187.9px;line-height:19px;font-size:13px;letter-spacing:-0.100px;font-family:'Liberation Mono', monospace;white-space:pre;color:#d4d4d4"><span style="color:#ffd700">}</span></div>
<svg style="position:absolute;left:826px;top:163.3px;" width="47" height="5" viewBox="0 0 47 5"><path d="M0 3.200L2 1L6 3.2L10 1L14 3.2L18 1L22 3.2L26 1L30 3.2L34 1L38 3.2L42 1L46 3.2" fill="none" stroke="#cca700" stroke-width="1"/></svg>
<div style="position:absolute;left:1794px;top:92.5px;width:28px;height:1.2px;background:#8a7a98;opacity:.5;"></div>
<div style="position:absolute;left:1794px;top:98.7px;width:47px;height:1.2px;background:#6f8fae;opacity:.5;"></div>
<div style="position:absolute;left:1841px;top:98.7px;width:6px;height:1.2px;background:#cca700;opacity:.5;"></div>
<div style="position:absolute;left:1848px;top:98.7px;width:5px;height:1.2px;background:#9a9a9a;opacity:.5;"></div>
<div style="position:absolute;left:1796px;top:100.7px;width:66px;height:1.2px;background:#9a8a80;opacity:.5;"></div>
<div style="position:absolute;left:1794px;top:102.7px;width:1.5px;height:1.2px;background:#b8a000;opacity:.5;"></div>
<div style="position:absolute;left:1906.5px;top:92px;width:1px;height:918px;background:#292929;"></div>
<div style="position:absolute;left:1907px;top:92px;width:13px;height:1px;background:#292929;"></div>
<div style="position:absolute;left:1907px;top:142.5px;width:13px;height:2px;background:#a0a0a0;"></div>
<div style="position:absolute;left:1915.5px;top:144px;width:4.5px;height:16px;background:#cca700;"></div>
<div style="position:absolute;left:48px;top:35px;width:348px;height:975px;background:#181818;border-right:1px solid #2b2b2b;box-sizing:border-box;"></div>
<div style="position:absolute;left:68.2px;top:45.30px;line-height:16px;font-size:10.67px;font-family:'Liberation Sans', sans-serif;color:#c4c4c4;white-space:pre;transform:scaleX(0.8673);transform-origin:left center;">EXPLORER</div>
<svg style="position:absolute;left:365px;top:50px;" width="16" height="6" viewBox="0 0 16 6"><circle cx="2.500" cy="3" r="1.150" fill="#c5c5c5"/><circle cx="7.500" cy="3" r="1.150" fill="#c5c5c5"/><circle cx="12.500" cy="3" r="1.150" fill="#c5c5c5"/></svg>
<svg style="position:absolute;left:50px;top:73.5px;" width="16" height="16" viewBox="0 0 16 16"><path d="M3.2 5.700L8 10.500 12.800 5.700" fill="none" stroke="#c5c5c5" stroke-width="1.15"/></svg>
<div style="position:absolute;left:68.2px;top:73.30px;line-height:16px;font-size:10.8px;font-family:'Liberation Sans', sans-serif;color:#d0d0d0;white-space:pre;font-weight:bold;transform:scaleX(0.9634);transform-origin:left center;">READINGGROUP-WEBSITE</div>
<div style="position:absolute;left:48px;top:92px;width:347px;height:852px;overflow:hidden">
<div style="position:absolute;left:-48px;top:-92px;width:400px;height:1000px">
<svg style="position:absolute;left:62.9px;top:95px;" width="16" height="16" viewBox="0 0 16 16"><path d="M5.7 3.2L10.5 8 5.7 12.800" fill="none" stroke="#c5c5c5" stroke-width="1.15"/></svg>
<div style="position:absolute;left:82px;top:94.60px;line-height:19px;font-size:12.61px;font-family:'Liberation Sans', sans-serif;color:#cccccc;white-space:pre;transform:scaleX(1.0656);transform-origin:left center;">.github</div>
<svg style="position:absolute;left:62.9px;top:117px;" width="16" height="16" viewBox="0 0 16 16"><path d="M5.7 3.2L10.5 8 5.7 12.800" fill="none" stroke="#c5c5c5" stroke-width="1.15"/></svg>
<div style="position:absolute;left:82px;top:116.60px;line-height:19px;font-size:12.61px;font-family:'Liberation Sans', sans-serif;color:#cccccc;white-space:pre;transform:scaleX(1.0175);transform-origin:left center;">backend</div>
<svg style="position:absolute;left:62.9px;top:139px;" width="16" height="16" viewBox="0 0 16 16"><path d="M5.7 3.2L10.5 8 5.7 12.800" fill="none" stroke="#c5c5c5" stroke-width="1.15"/></svg>
<div style="position:absolute;left:82px;top:138.60px;line-height:19px;font-size:12.61px;font-family:'Liberation Sans', sans-serif;color:#cccccc;white-space:pre;transform:scaleX(1.0318);transform-origin:left center;">docker</div>
<svg style="position:absolute;left:63px;top:161px;" width="16" height="16" viewBox="0 0 16 16"><path d="M3.2 5.700L8 10.500 12.800 5.700" fill="none" stroke="#c5c5c5" stroke-width="1.15"/></svg>
<div style="position:absolute;left:82px;top:160.60px;line-height:19px;font-size:12.61px;font-family:'Liberation Sans', sans-serif;color:#cca700;white-space:pre;transform:scaleX(1.0752);transform-origin:left center;">frontend</div>
<div style="position:absolute;left:370px;top:164.8px;width:8.4px;height:8.4px;background:#cca700;border-radius:50%;opacity:.55;"></div>
<svg style="position:absolute;left:70.9px;top:183px;" width="16" height="16" viewBox="0 0 16 16"><path d="M5.7 3.2L10.5 8 5.7 12.800" fill="none" stroke="#c5c5c5" stroke-width="1.15"/></svg>
<div style="position:absolute;left:90px;top:182.60px;line-height:19px;font-size:12.61px;font-family:'Liberation Sans', sans-serif;color:#8c8c8c;white-space:pre;transform:scaleX(1.0172);transform-origin:left center;">node_modules</div>
<svg style="position:absolute;left:70.9px;top:205px;" width="16" height="16" viewBox="0 0 16 16"><path d="M5.7 3.2L10.5 8 5.7 12.800" fill="none" stroke="#c5c5c5" stroke-width="1.15"/></svg>
<div style="position:absolute;left:90px;top:204.60px;line-height:19px;font-size:12.61px;font-family:'Liberation Sans', sans-serif;color:#cccccc;white-space:pre;transform:scaleX(1.0602);transform-origin:left center;">public</div>
<svg style="position:absolute;left:71px;top:227px;" width="16" height="16" viewBox="0 0 16 16"><path d="M3.2 5.700L8 10.500 12.800 5.700" fill="none" stroke="#c5c5c5" stroke-width="1.15"/></svg>
<div style="position:absolute;left:90px;top:226.60px;line-height:19px;font-size:12.61px;font-family:'Liberation Sans', sans-serif;color:#cca700;white-space:pre;transform:scaleX(0.9546);transform-origin:left center;">src</div>
<div style="position:absolute;left:370px;top:230.8px;width:8.4px;height:8.4px;background:#cca700;border-radius:50%;opacity:.55;"></div>
<svg style="position:absolute;left:79px;top:249px;" width="16" height="16" viewBox="0 0 16 16"><path d="M3.2 5.700L8 10.500 12.800 5.700" fill="none" stroke="#c5c5c5" stroke-width="1.15"/></svg>
<div style="position:absolute;left:98px;top:248.60px;line-height:19px;font-size:12.61px;font-family:'Liberation Sans', sans-serif;color:#cca700;white-space:pre;transform:scaleX(1.0343);transform-origin:left center;">api</div>
<div style="position:absolute;left:370px;top:252.8px;width:8.4px;height:8.4px;background:#cca700;border-radius:50%;opacity:.55;"></div>
<div style="position:absolute;left:48px;top:268px;width:347px;height:22px;background:#37373d;"></div>
<div style="position:absolute;left:89.0px;top:273.30px;line-height:12px;font-size:10.6px;font-family:'Liberation Sans', sans-serif;color:#cbcb41;white-space:pre;font-weight:bold;letter-spacing:-0.7px;transform:scaleX(0.93);transform-origin:left center;">JS</div>
<div style="position:absolute;left:106px;top:270.60px;line-height:19px;font-size:12.61px;font-family:'Liberation Sans', sans-serif;color:#cca700;white-space:pre;transform:scaleX(0.9995);transform-origin:left center;">aboutUs.js</div>
<div style="position:absolute;right:20.5px;top:271.60px;line-height:17px;font-size:11.35px;font-family:'Liberation Sans', sans-serif;color:#cca700;white-space:pre;transform:scaleX(0.9647);transform-origin:right center;">1, U</div>
<div style="position:absolute;left:89.0px;top:295.30px;line-height:12px;font-size:10.6px;font-family:'Liberation Sans', sans-serif;color:#cbcb41;white-space:pre;font-weight:bold;letter-spacing:-0.7px;transform:scaleX(0.93);transform-origin:left center;">JS</div>
<div style="position:absolute;left:106px;top:292.60px;line-height:19px;font-size:12.61px;font-family:'Liberation Sans', sans-serif;color:#e2c08d;white-space:pre;transform:scaleX(1.001);transform-origin:left center;">auth.js</div>
<div style="position:absolute;right:20.5px;top:293.60px;line-height:17px;font-size:11.35px;font-family:'Liberation Sans', sans-serif;color:#e2c08d;white-space:pre;transform:scaleX(1.1112);transform-origin:right center;">M</div>
<div style="position:absolute;left:89.0px;top:317.30px;line-height:12px;font-size:10.6px;font-family:'Liberation Sans', sans-serif;color:#cbcb41;white-space:pre;font-weight:bold;letter-spacing:-0.7px;transform:scaleX(0.93);transform-origin:left center;">JS</div>
<div style="position:absolute;left:106px;top:314.60px;line-height:19px;font-size:12.61px;font-family:'Liberation Sans', sans-serif;color:#cccccc;white-space:pre;transform:scaleX(0.9595);transform-origin:left center;">axios.js</div>
<div style="position:absolute;left:89.0px;top:339.30px;line-height:12px;font-size:10.6px;font-family:'Liberation Sans', sans-serif;color:#cbcb41;white-space:pre;font-weight:bold;letter-spacing:-0.7px;transform:scaleX(0.93);transform-origin:left center;">JS</div>
<div style="position:absolute;left:106px;top:336.60px;line-height:19px;font-size:12.61px;font-family:'Liberation Sans', sans-serif;color:#cccccc;white-space:pre;transform:scaleX(1.0255);transform-origin:left center;">AxiosInterceptor.js</div>
<div style="position:absolute;left:89.0px;top:361.30px;line-height:12px;font-size:10.6px;font-family:'Liberation Sans', sans-serif;color:#cbcb41;white-space:pre;font-weight:bold;letter-spacing:-0.7px;transform:scaleX(0.93);transform-origin:left center;">JS</div>
<div style="position:absolute;left:106px;top:358.60px;line-height:19px;font-size:12.61px;font-family:'Liberation Sans', sans-serif;color:#73c991;white-space:pre;transform:scaleX(1.0062);transform-origin:left center;">cardPhoto.js</div>
<div style="position:absolute;right:20.5px;top:359.60px;line-height:17px;font-size:11.35px;font-family:'Liberation Sans', sans-serif;color:#8a8a8a;white-space:pre;transform:scaleX(0.98);transform-origin:right center;">U</div>
<div style="position:absolute;left:89.0px;top:383.30px;line-height:12px;font-size:10.6px;font-family:'Liberation Sans', sans-serif;color:#cbcb41;white-space:pre;font-weight:bold;letter-spacing:-0.7px;transform:scaleX(0.93);transform-origin:left center;">JS</div>
<div style="position:absolute;left:106px;top:380.60px;line-height:19px;font-size:12.61px;font-family:'Liberation Sans', sans-serif;color:#cccccc;white-space:pre;transform:scaleX(1.0248);transform-origin:left center;">getToken.js</div>
<div style="position:absolute;left:89.0px;top:405.30px;line-height:12px;font-size:10.6px;font-family:'Liberation Sans', sans-serif;color:#cbcb41;white-space:pre;font-weight:bold;letter-spacing:-0.7px;transform:scaleX(0.93);transform-origin:left center;">JS</div>
<div style="position:absolute;left:106px;top:402.60px;line-height:19px;font-size:12.61px;font-family:'Liberation Sans', sans-serif;color:#cccccc;white-space:pre;transform:scaleX(1.0025);transform-origin:left center;">setToken.js</div>
<svg style="position:absolute;left:78.9px;top:425px;" width="16" height="16" viewBox="0 0 16 16"><path d="M5.7 3.2L10.5 8 5.7 12.800" fill="none" stroke="#c5c5c5" stroke-width="1.15"/></svg>
<div style="position:absolute;left:98px;top:424.60px;line-height:19px;font-size:12.61px;font-family:'Liberation Sans', sans-serif;color:#cccccc;white-space:pre;transform:scaleX(0.9431);transform-origin:left center;">assets</div>
<svg style="position:absolute;left:79px;top:447px;" width="16" height="16" viewBox="0 0 16 16"><path d="M3.2 5.700L8 10.500 12.800 5.700" fill="none" stroke="#c5c5c5" stroke-width="1.15"/></svg>
<div style="position:absolute;left:98px;top:446.60px;line-height:19px;font-size:12.61px;font-family:'Liberation Sans', sans-serif;color:#cca700;white-space:pre;transform:scaleX(1.0418);transform-origin:left center;">components</div>
<div style="position:absolute;left:370px;top:450.8px;width:8.4px;height:8.4px;background:#cca700;border-radius:50%;opacity:.55;"></div>
<svg style="position:absolute;left:87px;top:469px;" width="16" height="16" viewBox="0 0 16 16"><path d="M3.2 5.700L8 10.500 12.800 5.700" fill="none" stroke="#c5c5c5" stroke-width="1.15"/></svg>
<div style="position:absolute;left:106px;top:468.60px;line-height:19px;font-size:12.61px;font-family:'Liberation Sans', sans-serif;color:#cca700;white-space:pre;transform:scaleX(0.9573);transform-origin:left center;">ForPages</div>
<div style="position:absolute;left:370px;top:472.8px;width:8.4px;height:8.4px;background:#cca700;border-radius:50%;opacity:.55;"></div>
<svg style="position:absolute;left:94.9px;top:491px;" width="16" height="16" viewBox="0 0 16 16"><path d="M5.7 3.2L10.5 8 5.7 12.800" fill="none" stroke="#c5c5c5" stroke-width="1.15"/></svg>
<div style="position:absolute;left:114px;top:490.60px;line-height:19px;font-size:12.61px;font-family:'Liberation Sans', sans-serif;color:#cccccc;white-space:pre;transform:scaleX(1.0304);transform-origin:left center;">AboutUs</div>
<svg style="position:absolute;left:95px;top:513px;" width="16" height="16" viewBox="0 0 16 16"><path d="M3.2 5.700L8 10.500 12.800 5.700" fill="none" stroke="#c5c5c5" stroke-width="1.15"/></svg>
<div style="position:absolute;left:114px;top:512.60px;line-height:19px;font-size:12.61px;font-family:'Liberation Sans', sans-serif;color:#cca700;white-space:pre;transform:scaleX(1.0593);transform-origin:left center;">Auth</div>
<div style="position:absolute;left:370px;top:516.8px;width:8.4px;height:8.4px;background:#cca700;border-radius:50%;opacity:.55;"></div>
<svg style="position:absolute;left:103px;top:535px;" width="16" height="16" viewBox="0 0 16 16"><path d="M3.2 5.700L8 10.500 12.800 5.700" fill="none" stroke="#c5c5c5" stroke-width="1.15"/></svg>
<div style="position:absolute;left:122px;top:534.60px;line-height:19px;font-size:12.61px;font-family:'Liberation Sans', sans-serif;color:#cca700;white-space:pre;transform:scaleX(1.0328);transform-origin:left center;">Login</div>
<div style="position:absolute;left:370px;top:538.8px;width:8.4px;height:8.4px;background:#cca700;border-radius:50%;opacity:.55;"></div>
<svg style="position:absolute;left:112.5px;top:558.5px;" width="13" height="13" viewBox="0 0 13 13"><g fill="none" stroke="#4683c4" stroke-width=".95"><ellipse cx="6.500" cy="6.500" rx="6" ry="2.350"/><ellipse cx="6.500" cy="6.500" rx="6" ry="2.350" transform="rotate(60 6.500 6.500)"/><ellipse cx="6.500" cy="6.500" rx="6" ry="2.350" transform="rotate(120 6.500 6.500)"/></g><circle cx="6.500" cy="6.500" r="1.150" fill="#4683c4"/></svg>
<div style="position:absolute;left:130px;top:556.60px;line-height:19px;font-size:12.61px;font-family:'Liberation Sans', sans-serif;color:#e2c08d;white-space:pre;transform:scaleX(0.992);transform-origin:left center;">FirstLoginResetPasswordModal.jsx</div>
<div style="position:absolute;right:20.5px;top:557.60px;line-height:17px;font-size:11.35px;font-family:'Liberation Sans', sans-serif;color:#e2c08d;white-space:pre;transform:scaleX(1.1112);transform-origin:right center;">M</div>
<svg style="position:absolute;left:112.5px;top:580.5px;" width="13" height="13" viewBox="0 0 13 13"><g fill="none" stroke="#4683c4" stroke-width=".95"><ellipse cx="6.500" cy="6.500" rx="6" ry="2.350"/><ellipse cx="6.500" cy="6.500" rx="6" ry="2.350" transform="rotate(60 6.500 6.500)"/><ellipse cx="6.500" cy="6.500" rx="6" ry="2.350" transform="rotate(120 6.500 6.500)"/></g><circle cx="6.500" cy="6.500" r="1.150" fill="#4683c4"/></svg>
<div style="position:absolute;left:130px;top:578.60px;line-height:19px;font-size:12.61px;font-family:'Liberation Sans', sans-serif;color:#cca700;white-space:pre;transform:scaleX(0.9985);transform-origin:left center;">LoginForm.jsx</div>
<div style="position:absolute;right:20.5px;top:579.60px;line-height:17px;font-size:11.35px;font-family:'Liberation Sans', sans-serif;color:#cca700;white-space:pre;transform:scaleX(1.0649);transform-origin:right center;">9+, M</div>
<svg style="position:absolute;left:112.5px;top:602.5px;" width="13" height="13" viewBox="0 0 13 13"><g fill="none" stroke="#4683c4" stroke-width=".95"><ellipse cx="6.500" cy="6.500" rx="6" ry="2.350"/><ellipse cx="6.500" cy="6.500" rx="6" ry="2.350" transform="rotate(60 6.500 6.500)"/><ellipse cx="6.500" cy="6.500" rx="6" ry="2.350" transform="rotate(120 6.500 6.500)"/></g><circle cx="6.500" cy="6.500" r="1.150" fill="#4683c4"/></svg>
<div style="position:absolute;left:130px;top:600.60px;line-height:19px;font-size:12.61px;font-family:'Liberation Sans', sans-serif;color:#cca700;white-space:pre;transform:scaleX(0.9791);transform-origin:left center;">TOTPModal.jsx</div>
<div style="position:absolute;right:20.5px;top:601.60px;line-height:17px;font-size:11.35px;font-family:'Liberation Sans', sans-serif;color:#cca700;white-space:pre;transform:scaleX(0.9647);transform-origin:right center;">2, U</div>
<svg style="position:absolute;left:102.9px;top:623px;" width="16" height="16" viewBox="0 0 16 16"><path d="M5.7 3.2L10.5 8 5.7 12.800" fill="none" stroke="#c5c5c5" stroke-width="1.15"/></svg>
<div style="position:absolute;left:122px;top:622.60px;line-height:19px;font-size:12.61px;font-family:'Liberation Sans', sans-serif;color:#cccccc;white-space:pre;transform:scaleX(1.0416);transform-origin:left center;">NonAuthLayout</div>
<svg style="position:absolute;left:102.9px;top:645px;" width="16" height="16" viewBox="0 0 16 16"><path d="M5.7 3.2L10.5 8 5.7 12.800" fill="none" stroke="#c5c5c5" stroke-width="1.15"/></svg>
<div style="position:absolute;left:122px;top:644.60px;line-height:19px;font-size:12.61px;font-family:'Liberation Sans', sans-serif;color:#cccccc;white-space:pre;transform:scaleX(0.9931);transform-origin:left center;">Register</div>
<div style="position:absolute;left:370px;top:648.8px;width:8.4px;height:8.4px;background:#8b7a78;border-radius:50%;"></div>
<svg style="position:absolute;left:102.9px;top:667px;" width="16" height="16" viewBox="0 0 16 16"><path d="M5.7 3.2L10.5 8 5.7 12.800" fill="none" stroke="#c5c5c5" stroke-width="1.15"/></svg>
<div style="position:absolute;left:122px;top:666.60px;line-height:19px;font-size:12.61px;font-family:'Liberation Sans', sans-serif;color:#cccccc;white-space:pre;transform:scaleX(0.9672);transform-origin:left center;">ResetPassword</div>
<div style="position:absolute;left:370px;top:670.8px;width:8.4px;height:8.4px;background:#8b7a78;border-radius:50%;"></div>
<svg style="position:absolute;left:94.9px;top:689px;" width="16" height="16" viewBox="0 0 16 16"><path d="M5.7 3.2L10.5 8 5.7 12.800" fill="none" stroke="#c5c5c5" stroke-width="1.15"/></svg>
<div style="position:absolute;left:114px;top:688.60px;line-height:19px;font-size:12.61px;font-family:'Liberation Sans', sans-serif;color:#cccccc;white-space:pre;transform:scaleX(1.0017);transform-origin:left center;">CardsAndPhotos</div>
<svg style="position:absolute;left:94.9px;top:711px;" width="16" height="16" viewBox="0 0 16 16"><path d="M5.7 3.2L10.5 8 5.7 12.800" fill="none" stroke="#c5c5c5" stroke-width="1.15"/></svg>
<div style="position:absolute;left:114px;top:710.60px;line-height:19px;font-size:12.61px;font-family:'Liberation Sans', sans-serif;color:#cccccc;white-space:pre;transform:scaleX(1.0128);transform-origin:left center;">Connect</div>
<svg style="position:absolute;left:94.9px;top:733px;" width="16" height="16" viewBox="0 0 16 16"><path d="M5.7 3.2L10.5 8 5.7 12.800" fill="none" stroke="#c5c5c5" stroke-width="1.15"/></svg>
<div style="position:absolute;left:114px;top:732.60px;line-height:19px;font-size:12.61px;font-family:'Liberation Sans', sans-serif;color:#cccccc;white-space:pre;transform:scaleX(1.0153);transform-origin:left center;">Dashboard</div>
<svg style="position:absolute;left:94.9px;top:755px;" width="16" height="16" viewBox="0 0 16 16"><path d="M5.7 3.2L10.5 8 5.7 12.800" fill="none" stroke="#c5c5c5" stroke-width="1.15"/></svg>
<div style="position:absolute;left:114px;top:754.60px;line-height:19px;font-size:12.61px;font-family:'Liberation Sans', sans-serif;color:#cccccc;white-space:pre;transform:scaleX(0.9565);transform-origin:left center;">Events</div>
<svg style="position:absolute;left:94.9px;top:777px;" width="16" height="16" viewBox="0 0 16 16"><path d="M5.7 3.2L10.5 8 5.7 12.800" fill="none" stroke="#c5c5c5" stroke-width="1.15"/></svg>
<div style="position:absolute;left:114px;top:776.60px;line-height:19px;font-size:12.61px;font-family:'Liberation Sans', sans-serif;color:#cccccc;white-space:pre;transform:scaleX(1.0096);transform-origin:left center;">GuidedReading</div>
<svg style="position:absolute;left:94.9px;top:799px;" width="16" height="16" viewBox="0 0 16 16"><path d="M5.7 3.2L10.5 8 5.7 12.800" fill="none" stroke="#c5c5c5" stroke-width="1.15"/></svg>
<div style="position:absolute;left:114px;top:798.60px;line-height:19px;font-size:12.61px;font-family:'Liberation Sans', sans-serif;color:#cccccc;white-space:pre;transform:scaleX(1.0383);transform-origin:left center;">Home</div>
<svg style="position:absolute;left:94.9px;top:821px;" width="16" height="16" viewBox="0 0 16 16"><path d="M5.7 3.2L10.5 8 5.7 12.800" fill="none" stroke="#c5c5c5" stroke-width="1.15"/></svg>
<div style="position:absolute;left:114px;top:820.60px;line-height:19px;font-size:12.61px;font-family:'Liberation Sans', sans-serif;color:#cccccc;white-space:pre;transform:scaleX(0.9971);transform-origin:left center;">News</div>
<svg style="position:absolute;left:94.9px;top:843px;" width="16" height="16" viewBox="0 0 16 16"><path d="M5.7 3.2L10.5 8 5.7 12.800" fill="none" stroke="#c5c5c5" stroke-width="1.15"/></svg>
<div style="position:absolute;left:114px;top:842.60px;line-height:19px;font-size:12.61px;font-family:'Liberation Sans', sans-serif;color:#cccccc;white-space:pre;transform:scaleX(1.0236);transform-origin:left center;">Profile</div>
<svg style="position:absolute;left:94.9px;top:865px;" width="16" height="16" viewBox="0 0 16 16"><path d="M5.7 3.2L10.5 8 5.7 12.800" fill="none" stroke="#c5c5c5" stroke-width="1.15"/></svg>
<div style="position:absolute;left:114px;top:864.60px;line-height:19px;font-size:12.61px;font-family:'Liberation Sans', sans-serif;color:#cccccc;white-space:pre;transform:scaleX(1.0132);transform-origin:left center;">Settings</div>
<svg style="position:absolute;left:94.9px;top:887px;" width="16" height="16" viewBox="0 0 16 16"><path d="M5.7 3.2L10.5 8 5.7 12.800" fill="none" stroke="#c5c5c5" stroke-width="1.15"/></svg>
<div style="position:absolute;left:114px;top:886.60px;line-height:19px;font-size:12.61px;font-family:'Liberation Sans', sans-serif;color:#cccccc;white-space:pre;transform:scaleX(1.0125);transform-origin:left center;">Videos</div>
<svg style="position:absolute;left:86.9px;top:909px;" width="16" height="16" viewBox="0 0 16 16"><path d="M5.7 3.2L10.5 8 5.7 12.800" fill="none" stroke="#c5c5c5" stroke-width="1.15"/></svg>
<div style="position:absolute;left:106px;top:908.60px;line-height:19px;font-size:12.61px;font-family:'Liberation Sans', sans-serif;color:#cccccc;white-space:pre;transform:scaleX(1.0173);transform-origin:left center;">Global</div>
<svg style="position:absolute;left:86.9px;top:931px;" width="16" height="16" viewBox="0 0 16 16"><path d="M5.7 3.2L10.5 8 5.7 12.800" fill="none" stroke="#c5c5c5" stroke-width="1.15"/></svg>
<div style="position:absolute;left:106px;top:930.60px;line-height:19px;font-size:12.61px;font-family:'Liberation Sans', sans-serif;color:#cccccc;white-space:pre;transform:scaleX(1.0691);transform-origin:left center;">ui</div>
<div style="position:absolute;left:83.8px;top:268px;width:1px;height:154px;background:#6b5c5e;"></div>
</div></div>
<div style="position:absolute;left:48px;top:944px;width:347px;height:1px;background:#2b2b2b;"></div>
<svg style="position:absolute;left:50px;top:948px;" width="16" height="16" viewBox="0 0 16 16"><path d="M5.7 3.2L10.5 8 5.7 12.800" fill="none" stroke="#c5c5c5" stroke-width="1.15"/></svg>
<div style="position:absolute;left:68.2px;top:948.00px;line-height:16px;font-size:10.8px;font-family:'Liberation Sans', sans-serif;color:#d0d0d0;white-space:pre;font-weight:bold;transform:scaleX(0.9705);transform-origin:left center;">OUTLINE</div>
<div style="position:absolute;left:48px;top:966px;width:347px;height:1px;background:#2b2b2b;"></div>
<svg style="position:absolute;left:50px;top:970px;" width="16" height="16" viewBox="0 0 16 16"><path d="M5.7 3.2L10.5 8 5.7 12.800" fill="none" stroke="#c5c5c5" stroke-width="1.15"/></svg>
<div style="position:absolute;left:68.2px;top:970.00px;line-height:16px;font-size:10.8px;font-family:'Liberation Sans', sans-serif;color:#d0d0d0;white-space:pre;font-weight:bold;transform:scaleX(0.9782);transform-origin:left center;">TIMELINE</div>
<div style="position:absolute;left:48px;top:988px;width:347px;height:1px;background:#2b2b2b;"></div>
<svg style="position:absolute;left:50px;top:992px;" width="16" height="16" viewBox="0 0 16 16"><path d="M5.7 3.2L10.5 8 5.7 12.800" fill="none" stroke="#c5c5c5" stroke-width="1.15"/></svg>
<div style="position:absolute;left:68.2px;top:992.00px;line-height:16px;font-size:10.8px;font-family:'Liberation Sans', sans-serif;color:#d0d0d0;white-space:pre;font-weight:bold;transform:scaleX(1.0033);transform-origin:left center;">MCP FIGMA</div>
<div style="position:absolute;left:0px;top:35px;width:48px;height:975px;background:#181818;border-right:1px solid #2b2b2b;box-sizing:border-box;"></div>
<div style="position:absolute;left:0px;top:35px;width:2px;height:48px;background:#0078d4;"></div>
<svg style="position:absolute;left:12px;top:46px;" width="24" height="26" viewBox="0 0 24 26"><path d="M9.500 1.500H16.500L21.500 6.500V18.500A1 1 0 0 1 20.500 19.500H9.500A1 1 0 0 1 8.500 18.500V2.500A1 1 0 0 1 9.500 1.500z" fill="none" stroke="#d7d7d7" stroke-width="1.500" stroke-linejoin="round"/><path d="M16 1.800V7H21.200" fill="none" stroke="#d7d7d7" stroke-width="1.400"/><path d="M8.300 6.500H3A1 1 0 0 0 2 7.500V23A1 1 0 0 0 3 24H14A1 1 0 0 0 15 23V19.700" fill="none" stroke="#d7d7d7" stroke-width="1.500"/></svg>
<div style="position:absolute;left:23.5px;top:59px;width:16px;height:16px;background:#0078d4;border-radius:8px;"></div>
<div style="position:absolute;left:29.3px;top:60.20px;line-height:14px;font-size:9px;font-family:'Liberation Sans', sans-serif;color:#fff;white-space:pre;font-weight:bold;">1</div>
<svg style="position:absolute;left:11.3px;top:94.3px;" width="24" height="24" viewBox="0 0 24 24"><circle cx="10" cy="9.500" r="7" fill="none" stroke="#868686" stroke-width="1.500"/><path d="M15 14.800L22.500 22.500" stroke="#868686" stroke-width="1.600"/></svg>
<svg style="position:absolute;left:12px;top:142px;" width="24" height="26" viewBox="0 0 24 26"><circle cx="7" cy="4.500" r="2.700" fill="none" stroke="#868686" stroke-width="1.400"/><circle cx="7" cy="21" r="2.700" fill="none" stroke="#868686" stroke-width="1.400"/><circle cx="18" cy="9" r="2.700" fill="none" stroke="#868686" stroke-width="1.400"/><path d="M7 7.300V18.200M18 11.800C18 15.500 7 14 7 18" fill="none" stroke="#868686" stroke-width="1.400"/></svg>
<div style="position:absolute;left:23.5px;top:155px;width:16px;height:16px;background:#0078d4;border-radius:8px;"></div>
<div style="position:absolute;left:29px;top:156.20px;line-height:14px;font-size:9px;font-family:'Liberation Sans', sans-serif;color:#fff;white-space:pre;font-weight:bold;">8</div>
<svg style="position:absolute;left:11px;top:190px;" width="26" height="27" viewBox="0 0 26 27"><path d="M9.500 11.500V2.500L24.500 11.800 13.500 18.600" fill="none" stroke="#868686" stroke-width="1.500" stroke-linejoin="round"/><ellipse cx="7" cy="19.500" rx="3.500" ry="4.400" fill="none" stroke="#868686" stroke-width="1.400"/><path d="M4.600 15.600L3 13.800M9.400 15.600L11 13.800M3.500 19.500H.6M10.500 19.500H13.400M4.200 22.700L2.400 24.800M9.800 22.700L11.600 24.800M3.700 17.900H10.300" fill="none" stroke="#868686" stroke-width="1.300"/></svg>
<svg style="position:absolute;left:12px;top:238px;" width="26" height="25" viewBox="0 0 26 25"><path d="M2.600 4.300H12.300V22.800H2.600zM2.600 13.500H21.800V22.800H12.300" fill="none" stroke="#868686" stroke-width="1.400" stroke-linejoin="round"/><path d="M18.200 3.400L23.400 8.600 18.200 13.800 13 8.600z" fill="#181818" stroke="#868686" stroke-width="1.400" stroke-linejoin="round"/></svg>
<svg style="position:absolute;left:11.1px;top:285.9px;" width="25" height="25" viewBox="0 0 25 25"><circle cx="12.500" cy="12.500" r="11.200" fill="none" stroke="#868686" stroke-width="1.500"/><path d="M14.900 3.700L6.300 14.200H11.700L10.100 21.300L18.700 10.800H13.300z" fill="#868686"/></svg>
<svg style="position:absolute;left:11.1px;top:924.7px;" width="25" height="25" viewBox="0 0 25 25"><circle cx="12.500" cy="12.500" r="11.200" fill="none" stroke="#868686" stroke-width="1.500"/><circle cx="12.500" cy="9.700" r="4" fill="none" stroke="#868686" stroke-width="1.500"/><path d="M5.200 20.800C6.500 15.300 18.500 15.300 19.800 20.800" fill="none" stroke="#868686" stroke-width="1.500"/></svg>
<svg style="position:absolute;left:11.4px;top:973.5px;" width="25" height="25" viewBox="0 0 25 25"><path d="M10.22 5.14L10.50 2.09L14.50 2.09L14.78 5.14L16.09 5.69L18.44 3.72L21.28 6.56L19.31 8.91L19.86 10.22L22.91 10.50L22.91 14.50L19.86 14.78L19.31 16.09L21.28 18.44L18.44 21.28L16.09 19.31L14.78 19.86L14.50 22.91L10.50 22.91L10.22 19.86L8.91 19.31L6.56 21.28L3.72 18.44L5.69 16.09L5.14 14.78L2.09 14.50L2.09 10.50L5.14 10.22L5.69 8.91L3.72 6.56L6.56 3.72L8.91 5.69z" fill="none" stroke="#868686" stroke-width="1.400" stroke-linejoin="round"/><circle cx="12.500" cy="12.500" r="2.900" fill="none" stroke="#868686" stroke-width="1.400"/></svg>
<div style="position:absolute;left:0px;top:0px;width:1920px;height:35px;background:#1f1f1f;border-bottom:1px solid #2b2b2b;box-sizing:border-box;"></div>
<svg style="position:absolute;left:9.5px;top:8.5px;" width="17" height="17" viewBox="0 0 17 17"><path d="M12.300 .6L16.400 2.600V14.400L12.300 16.400z" fill="#2aaaf3"/><path d="M12.300 .6L4.300 7.900 1.700 5.900.6 6.500V10.500L1.700 11.100 4.300 9.100 12.300 16.400V12L7.700 8.500 12.300 5z" fill="#0b78c9"/></svg>
<div style="position:absolute;left:43.3px;top:7.80px;line-height:19px;font-size:12.61px;font-family:'Liberation Sans', sans-serif;color:#a9a9a9;white-space:pre;transform:scaleX(0.9569);transform-origin:left center;">File</div>
<div style="position:absolute;left:78.5px;top:7.80px;line-height:19px;font-size:12.61px;font-family:'Liberation Sans', sans-serif;color:#a9a9a9;white-space:pre;transform:scaleX(1.002);transform-origin:left center;">Edit</div>
<div style="position:absolute;left:116.3px;top:7.80px;line-height:19px;font-size:12.61px;font-family:'Liberation Sans', sans-serif;color:#a9a9a9;white-space:pre;transform:scaleX(1.0058);transform-origin:left center;">Selection</div>
<div style="position:absolute;left:184.7px;top:7.80px;line-height:19px;font-size:12.61px;font-family:'Liberation Sans', sans-serif;color:#a9a9a9;white-space:pre;transform:scaleX(1.0119);transform-origin:left center;">View</div>
<div style="position:absolute;left:228px;top:7.80px;line-height:19px;font-size:12.61px;font-family:'Liberation Sans', sans-serif;color:#a9a9a9;white-space:pre;transform:scaleX(0.9826);transform-origin:left center;">Go</div>
<div style="position:absolute;left:260.6px;top:7.80px;line-height:19px;font-size:12.61px;font-family:'Liberation Sans', sans-serif;color:#a9a9a9;white-space:pre;transform:scaleX(0.9714);transform-origin:left center;">Run</div>
<div style="position:absolute;left:299.2px;top:7.80px;line-height:19px;font-size:12.61px;font-family:'Liberation Sans', sans-serif;color:#a9a9a9;white-space:pre;transform:scaleX(1.0424);transform-origin:left center;">Terminal</div>
<div style="position:absolute;left:363.4px;top:7.80px;line-height:19px;font-size:12.61px;font-family:'Liberation Sans', sans-serif;color:#a9a9a9;white-space:pre;transform:scaleX(1.0343);transform-origin:left center;">Help</div>
<svg style="position:absolute;left:611.5px;top:10px;" width="15" height="15" viewBox="0 0 15 15"><path d="M13.500 7.500H1.800M7 2L1.500 7.500 7 13" fill="none" stroke="#a8a8a8" stroke-width="1.150"/></svg>
<svg style="position:absolute;left:637.5px;top:10px;" width="15" height="15" viewBox="0 0 15 15"><path d="M1.500 7.500H13.200M8 2L13.500 7.500 8 13" fill="none" stroke="#8d8d8d" stroke-width="1.150"/></svg>
<div style="position:absolute;left:666px;top:5px;width:602px;height:24px;box-sizing:border-box;border:1px solid #3a3a3a;border-radius:6px;background:#2a2a2a"></div>
<svg style="position:absolute;left:899.5px;top:9.5px;" width="15" height="15" viewBox="0 0 15 15"><circle cx="6" cy="6" r="4.300" fill="none" stroke="#a6a6a6" stroke-width="1.100"/><path d="M9.200 9.200L13.800 13.800" stroke="#a6a6a6" stroke-width="1.100"/></svg>
<div style="position:absolute;left:919px;top:9.00px;line-height:17px;font-size:11.64px;font-family:'Liberation Sans', sans-serif;color:#b9b9b9;white-space:pre;transform:scaleX(1.0506);transform-origin:left center;">readinggroup-website</div>
<svg style="position:absolute;left:1281px;top:9px;" width="18" height="17" viewBox="0 0 18 17"><path d="M11 2H2.500A1 1 0 0 0 1.500 3V11.500A1 1 0 0 0 2.500 12.500H4V15.500L7.500 12.500H10" fill="none" stroke="#c0c0c0" stroke-width="1.150" stroke-linejoin="round"/><path d="M13 1.500C13.300 4 14.200 5 16.700 5.500 14.200 6 13.300 7 13 9.500 12.700 7 11.800 6 9.300 5.500 11.800 5 12.700 4 13 1.500z" fill="#c0c0c0"/></svg>
<svg style="position:absolute;left:1302px;top:13px;" width="10" height="8" viewBox="0 0 10 8"><path d="M1.500 2L5 5.500 8.500 2" fill="none" stroke="#a0a0a0" stroke-width="1.100"/></svg>
<svg style="position:absolute;left:1682.5px;top:10px;" width="15" height="15" viewBox="0 0 15 15"><rect x=".8" y="1" width="5" height="12.500" rx="1" fill="none" stroke="#a3a3a3" stroke-width="1.100"/><rect x="8.800" y="1.200" width="4" height="4" rx=".8" fill="none" stroke="#a3a3a3" stroke-width="1.100"/><rect x="8.800" y="9" width="4" height="4" rx=".8" fill="none" stroke="#a3a3a3" stroke-width="1.100"/></svg>
<svg style="position:absolute;left:1707.5px;top:10px;" width="15" height="15" viewBox="0 0 15 15"><rect x=".8" y="1" width="13.200" height="12.500" rx="1" fill="none" stroke="#a3a3a3" stroke-width="1.100"/><path d="M1 1.200H6.500V13.300H1z" fill="#a3a3a3"/></svg>
<svg style="position:absolute;left:1733.5px;top:10px;" width="15" height="15" viewBox="0 0 15 15"><rect x=".8" y="1" width="13.200" height="12.500" rx="1" fill="none" stroke="#a3a3a3" stroke-width="1.100"/><path d="M1 9H14" stroke="#a3a3a3" stroke-width="1.100"/></svg>
<svg style="position:absolute;left:1759.5px;top:10px;" width="15" height="15" viewBox="0 0 15 15"><rect x=".8" y="1" width="13.200" height="12.500" rx="1" fill="none" stroke="#a3a3a3" stroke-width="1.100"/><path d="M7.400 1V13.500" stroke="#a3a3a3" stroke-width="1.100"/></svg>
<div style="position:absolute;left:1800px;top:16.3px;width:10.5px;height:1.1px;background:#bdbdbd;"></div>
<svg style="position:absolute;left:1845.5px;top:11.5px;" width="12" height="12" viewBox="0 0 12 12"><rect x=".6" y="2.700" width="8" height="8" rx="1.500" fill="none" stroke="#bdbdbd" stroke-width="1"/><path d="M2.800 .7H8.800A2.200 2.200 0 0 1 11 2.900V8.800" fill="none" stroke="#bdbdbd" stroke-width="1"/></svg>
<svg style="position:absolute;left:1892px;top:11.5px;" width="11" height="11" viewBox="0 0 11 11"><path d="M.5 .5L10.500 10.500M10.500 .5L.5 10.500" stroke="#bdbdbd" stroke-width="1.050"/></svg>
<div style="position:absolute;left:0px;top:1010px;width:1920px;height:22px;background:#181818;border-top:1px solid #2b2b2b;box-sizing:border-box;"></div>
<div style="position:absolute;left:0px;top:1011px;width:34px;height:21px;background:#0078d4;"></div>
<svg style="position:absolute;left:10.5px;top:1014px;" width="13" height="14" viewBox="0 0 13 14"><path d="M2.100 4.200L6.600 8.500 2.100 12.800M11.500 .9L7.200 4.700 11.500 8.500" fill="none" stroke="#fff" stroke-width="1.250"/></svg>
<svg style="position:absolute;left:42.5px;top:1014px;" width="12" height="15" viewBox="0 0 12 15"><circle cx="3" cy="2.800" r="1.700" fill="none" stroke="#c6c6c6" stroke-width="1"/><circle cx="3" cy="12.200" r="1.700" fill="none" stroke="#c6c6c6" stroke-width="1"/><circle cx="9.300" cy="5" r="1.700" fill="none" stroke="#c6c6c6" stroke-width="1"/><path d="M3 4.500V10.500M9.300 6.700C9.300 9 3 8.300 3 10.500" fill="none" stroke="#c6c6c6" stroke-width="1"/></svg>
<div style="position:absolute;left:59.3px;top:1013.10px;line-height:17px;font-size:11.64px;font-family:'Liberation Sans', sans-serif;color:#c6c6c6;white-space:pre;transform:scaleX(1.0255);transform-origin:left center;">backend*</div>
<svg style="position:absolute;left:114.5px;top:1014.5px;" width="15" height="14" viewBox="0 0 15 14"><path d="M2.300 6.300A5.200 5.200 0 0 1 12 4.500M12.700 7.700A5.200 5.200 0 0 1 3 9.500" fill="none" stroke="#c6c6c6" stroke-width="1.100"/><path d="M12.300 1.500V4.800H9M2.700 12.500V9.200H6" fill="none" stroke="#c6c6c6" stroke-width="1.100"/></svg>
<svg style="position:absolute;left:145px;top:1014.5px;" width="14" height="14" viewBox="0 0 14 14"><circle cx="7" cy="7" r="5.800" fill="none" stroke="#c6c6c6" stroke-width="1.050"/><path d="M4.700 4.700L9.300 9.300M9.300 4.700L4.700 9.300" stroke="#c6c6c6" stroke-width="1.050"/></svg>
<div style="position:absolute;left:163px;top:1013.10px;line-height:17px;font-size:11.64px;font-family:'Liberation Sans', sans-serif;color:#c6c6c6;white-space:pre;transform:scaleX(0.9992);transform-origin:left center;">0</div>
<svg style="position:absolute;left:172.5px;top:1014.5px;" width="14" height="14" viewBox="0 0 14 14"><path d="M7 1.700L13 12.300H1z" fill="none" stroke="#c6c6c6" stroke-width="1.050" stroke-linejoin="round"/><path d="M7 5.500V9M7 10V11.200" stroke="#c6c6c6" stroke-width="1.050"/></svg>
<div style="position:absolute;left:190.2px;top:1013.10px;line-height:17px;font-size:11.64px;font-family:'Liberation Sans', sans-serif;color:#c6c6c6;white-space:pre;transform:scaleX(0.9992);transform-origin:left center;">13</div>
<div style="position:absolute;left:218.5px;top:1013.10px;line-height:17px;font-size:11.64px;font-family:'Liberation Sans', sans-serif;color:#c6c6c6;white-space:pre;transform:scaleX(0.9517);transform-origin:left center;">{..} : Scanning..</div>
<div style="position:absolute;left:1374.7px;top:1013.10px;line-height:17px;font-size:11.64px;font-family:'Liberation Sans', sans-serif;color:#c6c6c6;white-space:pre;transform:scaleX(0.9823);transform-origin:left center;">Ln 4, Col 56</div>
<div style="position:absolute;left:1452.4px;top:1013.10px;line-height:17px;font-size:11.64px;font-family:'Liberation Sans', sans-serif;color:#c6c6c6;white-space:pre;transform:scaleX(0.9428);transform-origin:left center;">Spaces: 4</div>
<div style="position:absolute;left:1517.2px;top:1013.10px;line-height:17px;font-size:11.64px;font-family:'Liberation Sans', sans-serif;color:#c6c6c6;white-space:pre;transform:scaleX(0.9597);transform-origin:left center;">UTF-8</div>
<div style="position:absolute;left:1564.7px;top:1013.10px;line-height:17px;font-size:11.64px;font-family:'Liberation Sans', sans-serif;color:#c6c6c6;white-space:pre;transform:scaleX(0.859);transform-origin:left center;">CRLF</div>
<div style="position:absolute;left:1626.8px;top:1013.10px;line-height:17px;font-size:11.64px;font-family:'Liberation Sans', sans-serif;color:#c6c6c6;white-space:pre;transform:scaleX(0.9634);transform-origin:left center;">JavaScript</div>
<div style="position:absolute;left:1742.8px;top:1013.10px;line-height:17px;font-size:11.64px;font-family:'Liberation Sans', sans-serif;color:#8f8f8f;white-space:pre;transform:scaleX(0.9886);transform-origin:left center;">MCP Figma</div>
<div style="position:absolute;left:1836.7px;top:1013.10px;line-height:17px;font-size:11.64px;font-family:'Liberation Sans', sans-serif;color:#c6c6c6;white-space:pre;transform:scaleX(1.0308);transform-origin:left center;">Prettier</div>
<div style="position:absolute;left:1608px;top:1012.30px;line-height:18px;font-size:12px;font-family:'Liberation Sans', sans-serif;color:#c6c6c6;white-space:pre;">{</div>
<div style="position:absolute;left:1611.5px;top:1012.30px;line-height:18px;font-size:12px;font-family:'Liberation Sans', sans-serif;color:#c6c6c6;white-space:pre;"> }</div>
<svg style="position:absolute;left:1614.5px;top:1020.5px;" width="8" height="8" viewBox="0 0 8 8"><circle cx="4" cy="4" r="3" fill="#181818" stroke="#c6c6c6" stroke-width=".9"/><path d="M2.800 2.800L5.200 5.200M5.200 2.800L2.800 5.200" stroke="#c6c6c6" stroke-width=".8"/></svg>
<svg style="position:absolute;left:1694.5px;top:1013.5px;" width="16" height="15" viewBox="0 0 16 15"><path d="M3.300 2.300C4.900 .9 7.300 1.300 8 3 8.700 1.300 11.100.9 12.700 2.300 14 3.600 13.600 5.500 13.300 6.300 14.600 7.200 15 8.200 15 9.600 13.500 12.200 10.500 13.300 8 13.300 5.500 13.300 2.500 12.200 1 9.600 1 8.200 1.400 7.200 2.700 6.300 2.400 5.500 2 3.600 3.300 2.300z" fill="none" stroke="#c6c6c6" stroke-width="1.600" stroke-linejoin="round"/><path d="M2.700 6.300C4.500 7.300 6.800 7 8 5 9.200 7 11.500 7.300 13.300 6.300" fill="none" stroke="#c6c6c6" stroke-width="1.400"/><path d="M6 8.800V11M10 8.800V11" stroke="#c6c6c6" stroke-width="1.700"/></svg>
<svg style="position:absolute;left:1728px;top:1016.5px;" width="10" height="10" viewBox="0 0 10 10"><circle cx="5" cy="5" r="3" fill="none" stroke="#8f8f8f" stroke-width="1.300"/></svg>
<svg style="position:absolute;left:1819px;top:1015.5px;" width="15" height="12" viewBox="0 0 15 12"><path d="M1 7L3.500 10 9 2.500M5.500 8.300L6.800 10 12.300 2.500" fill="none" stroke="#c6c6c6" stroke-width="1.250"/></svg>
<svg style="position:absolute;left:1891px;top:1014px;" width="14" height="15" viewBox="0 0 14 15"><path d="M7 1.500A4 4 0 0 0 3 5.500V9.500L1.800 11.500H12.200L11 9.500V5.500A4 4 0 0 0 7 1.500z" fill="none" stroke="#c6c6c6" stroke-width="1.050" stroke-linejoin="round"/><path d="M5.700 12.500A1.400 1.400 0 0 0 8.300 12.500" fill="none" stroke="#c6c6c6" stroke-width="1.050"/></svg>
<div style="position:absolute;left:0px;top:1032px;width:1920px;height:48px;background:linear-gradient(90deg,#1d202d 0,#1d202d 290px,#19214a 360px,#14205a 470px,#122062 620px,#122060 1000px,#142054 1290px,#191f40 1325px,#1d202d 1352px,#1d202d 1920px);"></div>
<div style="position:absolute;left:0px;top:1032px;width:1920px;height:1px;background:rgba(255,255,255,.13);"></div>
<svg style="position:absolute;left:22.3px;top:1044.2px;overflow:visible;" width="36.4" height="12.8" viewBox="0 0 36.4 12.8"><g transform="scale(0.8)"><path d="M7.80 9.6C8.00 5.2 3.60 5.2 3.80 8.3C4.00 9.9 6.20 9.9 7.80 9.3M3.90 8.6C2.20 9.6 0.80 11.500 0.80 14.6" fill="none" stroke="#f4f4f6" stroke-width="1.5" stroke-linecap="butt" stroke-linejoin="round"/><circle cx="15.90" cy="5.4" r="1.7" fill="#f4f4f6"/><path d="M20.80 10.7V.9M19.20 .9H20.80M20.80 2.6C21.20 .9 24.30 .2 25.70 1.2" fill="none" stroke="#f4f4f6" stroke-width="1.5" stroke-linecap="butt" stroke-linejoin="round"/><circle cx="28.60" cy="3.9" r=".95" fill="#f4f4f6"/><circle cx="28.60" cy="9.5" r=".95" fill="#f4f4f6"/><path d="M33.90 3.6C31.80 4.6 31.10 6.4 31.10 7.7C31.10 10.700 36.70 10.700 36.70 7.7C36.70 6.4 36.00 4.6 33.90 3.6z" fill="none" stroke="#f4f4f6" stroke-width="1.5" stroke-linecap="butt" stroke-linejoin="round"/><circle cx="40.20" cy="5.4" r="1.7" fill="#f4f4f6"/></g></svg><svg style="position:absolute;left:22.3px;top:1059.8px;overflow:visible;" width="51.0" height="12.8" viewBox="0 0 51.0 12.8"><g transform="scale(0.8)"><path d="M2.10 10.7V.9M0.50 .9H2.10M2.10 2.6C2.50 .9 5.60 .2 7.00 1.2" fill="none" stroke="#f4f4f6" stroke-width="1.5" stroke-linecap="butt" stroke-linejoin="round"/><circle cx="10.50" cy="5.4" r="1.7" fill="#f4f4f6"/><path d="M15.40 10.7V.9M13.80 .9H15.40M15.40 2.6C15.80 .9 18.90 .2 20.30 1.2" fill="none" stroke="#f4f4f6" stroke-width="1.5" stroke-linecap="butt" stroke-linejoin="round"/><path d="M24.70 3.6C22.60 4.6 21.90 6.4 21.90 7.7C21.90 10.700 27.50 10.700 27.50 7.7C27.50 6.4 26.80 4.6 24.70 3.6z" fill="none" stroke="#f4f4f6" stroke-width="1.5" stroke-linecap="butt" stroke-linejoin="round"/><path d="M33.20 -.2L28.50 12.6" fill="none" stroke="#f4f4f6" stroke-width="1.5" stroke-linecap="butt" stroke-linejoin="round"/><path d="M34.70 0L36.80 10.8" fill="none" stroke="#f4f4f6" stroke-width="1.5" stroke-linecap="butt" stroke-linejoin="round"/><circle cx="41.10" cy="5.4" r="1.7" fill="#f4f4f6"/><path d="M48.90 -.2L44.20 12.6" fill="none" stroke="#f4f4f6" stroke-width="1.5" stroke-linecap="butt" stroke-linejoin="round"/><path d="M50.40 0L52.50 10.8" fill="none" stroke="#f4f4f6" stroke-width="1.5" stroke-linecap="butt" stroke-linejoin="round"/><path d="M57.70 3.6C55.60 4.6 54.90 6.4 54.90 7.7C54.90 10.700 60.50 10.700 60.50 7.7C60.50 6.4 59.80 4.6 57.70 3.6z" fill="none" stroke="#f4f4f6" stroke-width="1.5" stroke-linecap="butt" stroke-linejoin="round"/></g></svg>
<svg style="position:absolute;left:783.5px;top:1044.5px;" width="25" height="23" viewBox="0 0 32 30"><path d="M1 4.500A2 2 0 0 1 3 2.500H11L14 6H29A2 2 0 0 1 31 8V12H1z" fill="#e3a21a"/><rect x="1" y="7.500" width="30" height="20.500" rx="2" fill="#ffd54a"/><path d="M1 23H31V26A2 2 0 0 1 29 28H3A2 2 0 0 1 1 26z" fill="#f5b83a"/><rect x="7.500" y="19.500" width="17" height="8.500" rx="1.500" fill="#1464c0"/><rect x="10.500" y="22.500" width="11" height="2.200" rx="1" fill="#4ea3f1"/></svg>
<div style="position:absolute;left:820px;top:1035.5px;width:40px;height:40px;background:rgba(255,255,255,.075);border-radius:4px;"></div>
<svg style="position:absolute;left:830px;top:1044.8px;" width="20.5" height="23.2" viewBox="313 155 344 396" preserveAspectRatio="none"><path d="M410 155L560 155 602 190 657 235 651 300 626 410 560 490 485 551 410 490 344 410 319 300 313 235 368 190z" fill="#fb4a22"/><path d="M398 236L485 223 572 236 622 285 602 332 560 396 545 431 485 467 425 431 410 396 368 332 348 285z" fill="#fff"/><path d="M408 263L463 276 456 301 420 291zM562 263L507 276 514 301 550 291zM473 306H497L494 352 485 362 476 352zM452 402L485 385 518 402 485 394z" fill="#fb4a22"/></svg>
<div style="position:absolute;left:832.5px;top:1071.8px;width:15.5px;height:2.4px;background:#4cc2ff;border-radius:1.200px;"></div>
<svg style="position:absolute;left:871px;top:1043px;" width="25.5" height="25" viewBox="0 0 32 32"><path d="M23.500 1L30.800 4.500V27.500L23.500 31z" fill="#2aa9f3"/><path d="M23.500 1L9.300 13.300 4.400 8.800 .8 11.200 5.800 16 .8 20.800 4.400 23.200 9.300 18.700 23.500 31V22.300L14.800 16 23.500 9.700z" fill="#0a73c4"/><path d="M23.500 1L30.800 4.500 23.500 9.200z" fill="#1f9cf0"/><path d="M23.500 22.800L30.800 27.500 23.500 31z" fill="#1f9cf0"/></svg>
<div style="position:absolute;left:881px;top:1072px;width:6px;height:2.2px;background:#9a9ca6;border-radius:1.100px;"></div>
<svg style="position:absolute;left:915.7px;top:1043.9px;" width="24" height="24" viewBox="0 0 32 32"><circle cx="16" cy="16" r="16" fill="#f9703e"/><path d="M7.500 25L9.800 21.800 18.800 12.200 21.300 14.600 11.800 23.300z" fill="#fbe9dc"/><circle cx="22.400" cy="9.900" r="3" fill="#fbe9dc"/></svg>
<svg style="position:absolute;left:959.8px;top:1044.8px;" width="25" height="23" viewBox="0 0 32 30"><defs><linearGradient id="pg959" x1="0" y1=".1" x2="1" y2=".5"><stop offset="0" stop-color="#6d4aff"/><stop offset=".45" stop-color="#8f9dfb"/><stop offset=".8" stop-color="#c4e6fb"/><stop offset="1" stop-color="#d4f0fb"/></linearGradient><linearGradient id="ph959" x1="0" y1="0" x2="0" y2="1"><stop offset="0" stop-color="#6d4aff" stop-opacity="0"/><stop offset="1" stop-color="#3fd6c6"/></linearGradient><linearGradient id="pi959" x1="0" y1="0" x2="1" y2="1"><stop offset="0" stop-color="#6a4cf0"/><stop offset="1" stop-color="#4a78d8"/></linearGradient></defs><path d="M3 1.800C1.200 1.600.4 3.200 1.400 4.800L13.600 26.800C14.800 28.900 17 28.900 18.200 26.800L30.600 6.800C31.600 5.200 30.800 3.700 29 3.500z" fill="url(#pg959)"/><path d="M13.600 26.800C14.800 28.900 17 28.900 18.200 26.800L21.500 21.300 10.300 21z" fill="url(#ph959)"/><path d="M5.300 4.600C4.500 4.500 4.100 5.300 4.500 6L13.700 22.300C14.200 23.200 15.100 23.200 15.600 22.300L22.800 9.400C23.300 8.600 22.900 7.900 22 7.800z" fill="url(#pi959)" fill-opacity=".8"/></svg>
<div style="position:absolute;left:997px;top:1039.7px;width:100px;height:32px;background:rgba(255,255,255,.075);border-radius:16.0px;"></div><svg style="position:absolute;left:1026px;top:1052.3px;overflow:visible;" width="22.4" height="12.9" viewBox="0 0 22.4 12.9"><g transform="scale(0.86)" fill="none" stroke="#f4f4f6" stroke-width="1.35" stroke-linecap="round" stroke-linejoin="round"><path d="M25 4.500V9.500C25 10.300 24.400 10.800 23.600 10.800H19.500"/><path d="M19.500 10.800C19 8 15.500 6.500 13.500 7.500 15.800 7.600 17.500 8.600 17.500 10.800H9.500"/><path d="M9.500 10.800V8.500M9.500 10.800H3C1.500 10.800 1 9.800 1 8.500V7.500"/></g><g transform="scale(0.86)" fill="#f4f4f6"><circle cx="23.300" cy="13.600" r=".9"/><circle cx="4" cy="4.300" r=".85"/><circle cx="6.200" cy="4.300" r=".85"/><circle cx="5.100" cy="2.500" r=".85"/></g></svg><svg style="position:absolute;left:1052.5px;top:1049.7px;" width="14.5" height="14.5" viewBox="0 0 17 17"><circle cx="10.500" cy="6.500" r="5" fill="none" stroke="#f4f4f6" stroke-width="1.700"/><path d="M6.800 10.200L1.500 15.500" stroke="#f4f4f6" stroke-width="1.900" stroke-linecap="round"/></svg>
<svg style="position:absolute;left:1110.8px;top:1045.2px;" width="23.3" height="22.5" viewBox="0 0 32 32"><rect x="0" y="0" width="15.300" height="15.300" fill="#37c3ff"/><rect x="16.700" y="0" width="15.300" height="15.300" fill="#5fd0ff"/><rect x="0" y="16.700" width="15.300" height="15.300" fill="#1ea4f5"/><rect x="16.700" y="16.700" width="15.300" height="15.300" fill="#38b8fb"/></svg>
</div>
</body></html>
